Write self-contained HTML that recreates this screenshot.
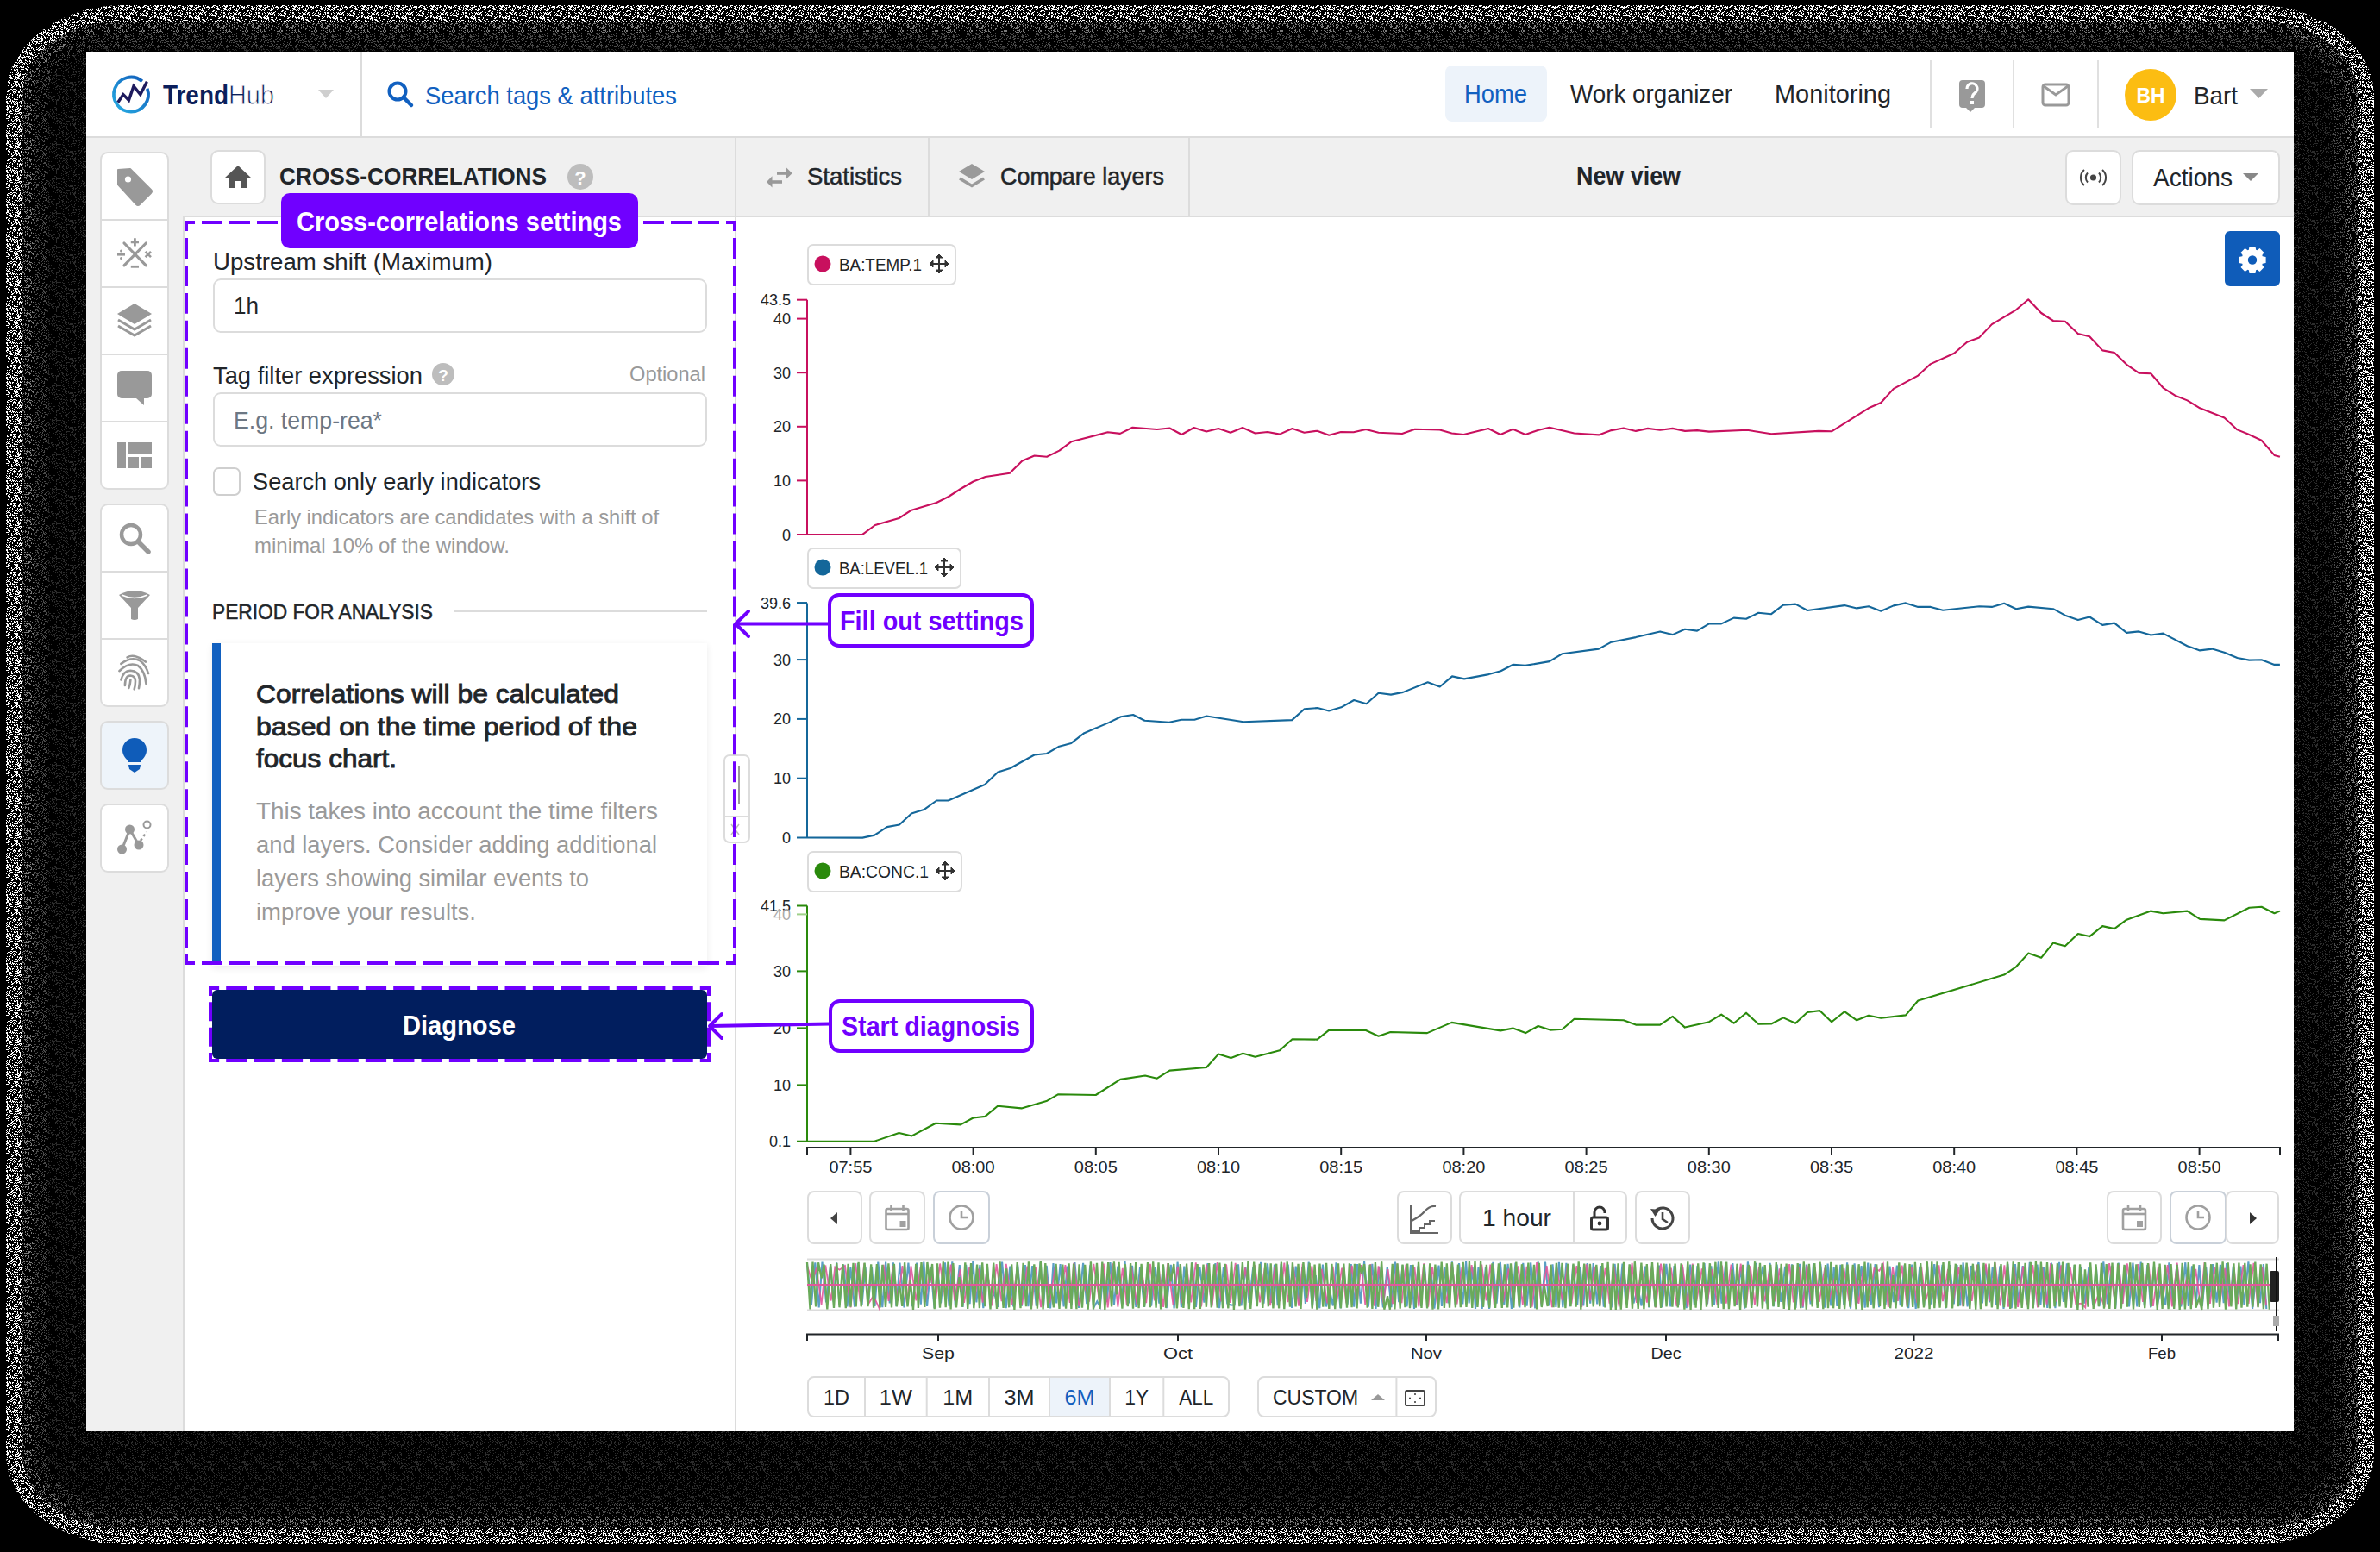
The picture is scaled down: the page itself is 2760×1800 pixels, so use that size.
<!DOCTYPE html>
<html><head><meta charset="utf-8"><title>TrendHub</title>
<style>
html,body{margin:0;padding:0;background:#000;width:2760px;height:1800px;overflow:hidden}
svg{display:block;font-family:"Liberation Sans", sans-serif}
</style></head><body>
<svg width="2760" height="1800" viewBox="0 0 2760 1800">
<defs><pattern id="pw" patternUnits="userSpaceOnUse" width="40" height="40"><path d="M0 0h1v1h-1zM3 0h1v1h-1zM8 0h1v1h-1zM9 0h1v1h-1zM13 0h1v1h-1zM16 0h1v1h-1zM19 0h1v1h-1zM20 0h1v1h-1zM24 0h1v1h-1zM26 0h1v1h-1zM27 0h1v1h-1zM30 0h1v1h-1zM31 0h1v1h-1zM32 0h1v1h-1zM34 0h1v1h-1zM35 0h1v1h-1zM39 0h1v1h-1zM2 1h1v1h-1zM3 1h1v1h-1zM10 1h1v1h-1zM16 1h1v1h-1zM17 1h1v1h-1zM20 1h1v1h-1zM31 1h1v1h-1zM32 1h1v1h-1zM37 1h1v1h-1zM3 2h1v1h-1zM8 2h1v1h-1zM11 2h1v1h-1zM20 2h1v1h-1zM23 2h1v1h-1zM32 2h1v1h-1zM33 2h1v1h-1zM34 2h1v1h-1zM0 3h1v1h-1zM3 3h1v1h-1zM4 3h1v1h-1zM5 3h1v1h-1zM7 3h1v1h-1zM8 3h1v1h-1zM11 3h1v1h-1zM12 3h1v1h-1zM14 3h1v1h-1zM15 3h1v1h-1zM18 3h1v1h-1zM20 3h1v1h-1zM23 3h1v1h-1zM24 3h1v1h-1zM27 3h1v1h-1zM30 3h1v1h-1zM31 3h1v1h-1zM32 3h1v1h-1zM34 3h1v1h-1zM38 3h1v1h-1zM2 4h1v1h-1zM6 4h1v1h-1zM8 4h1v1h-1zM9 4h1v1h-1zM12 4h1v1h-1zM14 4h1v1h-1zM18 4h1v1h-1zM19 4h1v1h-1zM21 4h1v1h-1zM25 4h1v1h-1zM32 4h1v1h-1zM35 4h1v1h-1zM36 4h1v1h-1zM38 4h1v1h-1zM0 5h1v1h-1zM3 5h1v1h-1zM4 5h1v1h-1zM5 5h1v1h-1zM8 5h1v1h-1zM9 5h1v1h-1zM18 5h1v1h-1zM20 5h1v1h-1zM21 5h1v1h-1zM23 5h1v1h-1zM29 5h1v1h-1zM34 5h1v1h-1zM36 5h1v1h-1zM37 5h1v1h-1zM38 5h1v1h-1zM7 6h1v1h-1zM8 6h1v1h-1zM9 6h1v1h-1zM14 6h1v1h-1zM17 6h1v1h-1zM19 6h1v1h-1zM20 6h1v1h-1zM22 6h1v1h-1zM23 6h1v1h-1zM26 6h1v1h-1zM27 6h1v1h-1zM28 6h1v1h-1zM30 6h1v1h-1zM35 6h1v1h-1zM36 6h1v1h-1zM38 6h1v1h-1zM0 7h1v1h-1zM1 7h1v1h-1zM3 7h1v1h-1zM6 7h1v1h-1zM7 7h1v1h-1zM11 7h1v1h-1zM12 7h1v1h-1zM18 7h1v1h-1zM20 7h1v1h-1zM21 7h1v1h-1zM22 7h1v1h-1zM23 7h1v1h-1zM30 7h1v1h-1zM31 7h1v1h-1zM32 7h1v1h-1zM35 7h1v1h-1zM36 7h1v1h-1zM0 8h1v1h-1zM1 8h1v1h-1zM2 8h1v1h-1zM3 8h1v1h-1zM5 8h1v1h-1zM6 8h1v1h-1zM8 8h1v1h-1zM12 8h1v1h-1zM15 8h1v1h-1zM17 8h1v1h-1zM21 8h1v1h-1zM22 8h1v1h-1zM25 8h1v1h-1zM27 8h1v1h-1zM29 8h1v1h-1zM30 8h1v1h-1zM37 8h1v1h-1zM39 8h1v1h-1zM2 9h1v1h-1zM3 9h1v1h-1zM11 9h1v1h-1zM12 9h1v1h-1zM13 9h1v1h-1zM17 9h1v1h-1zM19 9h1v1h-1zM20 9h1v1h-1zM21 9h1v1h-1zM26 9h1v1h-1zM27 9h1v1h-1zM34 9h1v1h-1zM37 9h1v1h-1zM2 10h1v1h-1zM4 10h1v1h-1zM5 10h1v1h-1zM8 10h1v1h-1zM11 10h1v1h-1zM22 10h1v1h-1zM23 10h1v1h-1zM24 10h1v1h-1zM27 10h1v1h-1zM32 10h1v1h-1zM34 10h1v1h-1zM38 10h1v1h-1zM1 11h1v1h-1zM12 11h1v1h-1zM13 11h1v1h-1zM14 11h1v1h-1zM17 11h1v1h-1zM20 11h1v1h-1zM21 11h1v1h-1zM22 11h1v1h-1zM24 11h1v1h-1zM25 11h1v1h-1zM27 11h1v1h-1zM31 11h1v1h-1zM32 11h1v1h-1zM34 11h1v1h-1zM36 11h1v1h-1zM7 12h1v1h-1zM8 12h1v1h-1zM10 12h1v1h-1zM16 12h1v1h-1zM19 12h1v1h-1zM23 12h1v1h-1zM26 12h1v1h-1zM33 12h1v1h-1zM34 12h1v1h-1zM35 12h1v1h-1zM6 13h1v1h-1zM7 13h1v1h-1zM11 13h1v1h-1zM35 13h1v1h-1zM39 13h1v1h-1zM3 14h1v1h-1zM9 14h1v1h-1zM16 14h1v1h-1zM17 14h1v1h-1zM19 14h1v1h-1zM20 14h1v1h-1zM26 14h1v1h-1zM30 14h1v1h-1zM32 14h1v1h-1zM34 14h1v1h-1zM37 14h1v1h-1zM38 14h1v1h-1zM2 15h1v1h-1zM5 15h1v1h-1zM9 15h1v1h-1zM11 15h1v1h-1zM17 15h1v1h-1zM19 15h1v1h-1zM20 15h1v1h-1zM24 15h1v1h-1zM27 15h1v1h-1zM28 15h1v1h-1zM31 15h1v1h-1zM32 15h1v1h-1zM33 15h1v1h-1zM36 15h1v1h-1zM37 15h1v1h-1zM4 16h1v1h-1zM6 16h1v1h-1zM10 16h1v1h-1zM11 16h1v1h-1zM15 16h1v1h-1zM17 16h1v1h-1zM21 16h1v1h-1zM24 16h1v1h-1zM31 16h1v1h-1zM33 16h1v1h-1zM34 16h1v1h-1zM36 16h1v1h-1zM38 16h1v1h-1zM2 17h1v1h-1zM3 17h1v1h-1zM5 17h1v1h-1zM6 17h1v1h-1zM7 17h1v1h-1zM8 17h1v1h-1zM9 17h1v1h-1zM19 17h1v1h-1zM20 17h1v1h-1zM27 17h1v1h-1zM30 17h1v1h-1zM38 17h1v1h-1zM0 18h1v1h-1zM4 18h1v1h-1zM5 18h1v1h-1zM10 18h1v1h-1zM13 18h1v1h-1zM17 18h1v1h-1zM19 18h1v1h-1zM21 18h1v1h-1zM22 18h1v1h-1zM25 18h1v1h-1zM26 18h1v1h-1zM30 18h1v1h-1zM32 18h1v1h-1zM34 18h1v1h-1zM35 18h1v1h-1zM39 18h1v1h-1zM9 19h1v1h-1zM10 19h1v1h-1zM13 19h1v1h-1zM16 19h1v1h-1zM19 19h1v1h-1zM20 19h1v1h-1zM22 19h1v1h-1zM26 19h1v1h-1zM28 19h1v1h-1zM29 19h1v1h-1zM30 19h1v1h-1zM0 20h1v1h-1zM14 20h1v1h-1zM15 20h1v1h-1zM19 20h1v1h-1zM22 20h1v1h-1zM23 20h1v1h-1zM25 20h1v1h-1zM26 20h1v1h-1zM27 20h1v1h-1zM30 20h1v1h-1zM31 20h1v1h-1zM34 20h1v1h-1zM36 20h1v1h-1zM0 21h1v1h-1zM13 21h1v1h-1zM14 21h1v1h-1zM23 21h1v1h-1zM26 21h1v1h-1zM27 21h1v1h-1zM29 21h1v1h-1zM30 21h1v1h-1zM31 21h1v1h-1zM4 22h1v1h-1zM5 22h1v1h-1zM10 22h1v1h-1zM29 22h1v1h-1zM31 22h1v1h-1zM34 22h1v1h-1zM35 22h1v1h-1zM36 22h1v1h-1zM39 22h1v1h-1zM1 23h1v1h-1zM12 23h1v1h-1zM13 23h1v1h-1zM15 23h1v1h-1zM16 23h1v1h-1zM17 23h1v1h-1zM23 23h1v1h-1zM31 23h1v1h-1zM35 23h1v1h-1zM36 23h1v1h-1zM37 23h1v1h-1zM3 24h1v1h-1zM6 24h1v1h-1zM9 24h1v1h-1zM11 24h1v1h-1zM14 24h1v1h-1zM19 24h1v1h-1zM23 24h1v1h-1zM25 24h1v1h-1zM27 24h1v1h-1zM32 24h1v1h-1zM37 24h1v1h-1zM38 24h1v1h-1zM1 25h1v1h-1zM2 25h1v1h-1zM8 25h1v1h-1zM10 25h1v1h-1zM12 25h1v1h-1zM13 25h1v1h-1zM16 25h1v1h-1zM18 25h1v1h-1zM22 25h1v1h-1zM23 25h1v1h-1zM28 25h1v1h-1zM30 25h1v1h-1zM31 25h1v1h-1zM32 25h1v1h-1zM33 25h1v1h-1zM34 25h1v1h-1zM39 25h1v1h-1zM0 26h1v1h-1zM4 26h1v1h-1zM5 26h1v1h-1zM6 26h1v1h-1zM8 26h1v1h-1zM9 26h1v1h-1zM15 26h1v1h-1zM16 26h1v1h-1zM17 26h1v1h-1zM18 26h1v1h-1zM21 26h1v1h-1zM22 26h1v1h-1zM24 26h1v1h-1zM25 26h1v1h-1zM26 26h1v1h-1zM27 26h1v1h-1zM28 26h1v1h-1zM29 26h1v1h-1zM33 26h1v1h-1zM35 26h1v1h-1zM37 26h1v1h-1zM15 27h1v1h-1zM17 27h1v1h-1zM18 27h1v1h-1zM21 27h1v1h-1zM22 27h1v1h-1zM26 27h1v1h-1zM34 27h1v1h-1zM35 27h1v1h-1zM37 27h1v1h-1zM39 27h1v1h-1zM1 28h1v1h-1zM4 28h1v1h-1zM6 28h1v1h-1zM10 28h1v1h-1zM12 28h1v1h-1zM16 28h1v1h-1zM30 28h1v1h-1zM32 28h1v1h-1zM34 28h1v1h-1zM35 28h1v1h-1zM36 28h1v1h-1zM37 28h1v1h-1zM0 29h1v1h-1zM6 29h1v1h-1zM8 29h1v1h-1zM11 29h1v1h-1zM14 29h1v1h-1zM20 29h1v1h-1zM23 29h1v1h-1zM29 29h1v1h-1zM32 29h1v1h-1zM38 29h1v1h-1zM2 30h1v1h-1zM4 30h1v1h-1zM5 30h1v1h-1zM14 30h1v1h-1zM20 30h1v1h-1zM22 30h1v1h-1zM23 30h1v1h-1zM24 30h1v1h-1zM25 30h1v1h-1zM29 30h1v1h-1zM30 30h1v1h-1zM34 30h1v1h-1zM1 31h1v1h-1zM7 31h1v1h-1zM11 31h1v1h-1zM22 31h1v1h-1zM24 31h1v1h-1zM31 31h1v1h-1zM32 31h1v1h-1zM34 31h1v1h-1zM35 31h1v1h-1zM0 32h1v1h-1zM5 32h1v1h-1zM8 32h1v1h-1zM11 32h1v1h-1zM17 32h1v1h-1zM18 32h1v1h-1zM19 32h1v1h-1zM21 32h1v1h-1zM23 32h1v1h-1zM24 32h1v1h-1zM25 32h1v1h-1zM26 32h1v1h-1zM29 32h1v1h-1zM35 32h1v1h-1zM37 32h1v1h-1zM39 32h1v1h-1zM4 33h1v1h-1zM6 33h1v1h-1zM7 33h1v1h-1zM9 33h1v1h-1zM14 33h1v1h-1zM18 33h1v1h-1zM20 33h1v1h-1zM22 33h1v1h-1zM27 33h1v1h-1zM28 33h1v1h-1zM30 33h1v1h-1zM34 33h1v1h-1zM37 33h1v1h-1zM38 33h1v1h-1zM0 34h1v1h-1zM6 34h1v1h-1zM8 34h1v1h-1zM9 34h1v1h-1zM10 34h1v1h-1zM11 34h1v1h-1zM16 34h1v1h-1zM25 34h1v1h-1zM26 34h1v1h-1zM28 34h1v1h-1zM31 34h1v1h-1zM32 34h1v1h-1zM37 34h1v1h-1zM39 34h1v1h-1zM4 35h1v1h-1zM7 35h1v1h-1zM12 35h1v1h-1zM16 35h1v1h-1zM17 35h1v1h-1zM19 35h1v1h-1zM20 35h1v1h-1zM38 35h1v1h-1zM39 35h1v1h-1zM2 36h1v1h-1zM10 36h1v1h-1zM12 36h1v1h-1zM14 36h1v1h-1zM25 36h1v1h-1zM26 36h1v1h-1zM27 36h1v1h-1zM28 36h1v1h-1zM30 36h1v1h-1zM31 36h1v1h-1zM32 36h1v1h-1zM38 36h1v1h-1zM39 36h1v1h-1zM2 37h1v1h-1zM7 37h1v1h-1zM8 37h1v1h-1zM10 37h1v1h-1zM11 37h1v1h-1zM12 37h1v1h-1zM14 37h1v1h-1zM15 37h1v1h-1zM16 37h1v1h-1zM19 37h1v1h-1zM23 37h1v1h-1zM24 37h1v1h-1zM27 37h1v1h-1zM31 37h1v1h-1zM32 37h1v1h-1zM35 37h1v1h-1zM1 38h1v1h-1zM2 38h1v1h-1zM3 38h1v1h-1zM5 38h1v1h-1zM6 38h1v1h-1zM7 38h1v1h-1zM8 38h1v1h-1zM10 38h1v1h-1zM13 38h1v1h-1zM15 38h1v1h-1zM17 38h1v1h-1zM18 38h1v1h-1zM20 38h1v1h-1zM22 38h1v1h-1zM24 38h1v1h-1zM26 38h1v1h-1zM27 38h1v1h-1zM32 38h1v1h-1zM33 38h1v1h-1zM35 38h1v1h-1zM39 38h1v1h-1zM0 39h1v1h-1zM1 39h1v1h-1zM8 39h1v1h-1zM29 39h1v1h-1zM30 39h1v1h-1zM32 39h1v1h-1zM35 39h1v1h-1z" fill="#ffffff"/></pattern></defs>
<defs><pattern id="pg1" patternUnits="userSpaceOnUse" width="40" height="40"><path d="M2 0h1v1h-1zM3 0h1v1h-1zM11 0h1v1h-1zM20 0h1v1h-1zM21 0h1v1h-1zM28 0h1v1h-1zM29 0h1v1h-1zM31 0h1v1h-1zM35 0h1v1h-1zM5 1h1v1h-1zM22 1h1v1h-1zM25 1h1v1h-1zM37 1h1v1h-1zM1 2h1v1h-1zM5 2h1v1h-1zM7 2h1v1h-1zM10 2h1v1h-1zM12 2h1v1h-1zM16 2h1v1h-1zM20 2h1v1h-1zM22 2h1v1h-1zM24 2h1v1h-1zM26 2h1v1h-1zM28 2h1v1h-1zM31 2h1v1h-1zM32 2h1v1h-1zM35 2h1v1h-1zM37 2h1v1h-1zM38 2h1v1h-1zM2 3h1v1h-1zM4 3h1v1h-1zM13 3h1v1h-1zM16 3h1v1h-1zM19 3h1v1h-1zM23 3h1v1h-1zM28 3h1v1h-1zM30 3h1v1h-1zM31 3h1v1h-1zM32 3h1v1h-1zM33 3h1v1h-1zM34 3h1v1h-1zM0 4h1v1h-1zM10 4h1v1h-1zM11 4h1v1h-1zM13 4h1v1h-1zM16 4h1v1h-1zM17 4h1v1h-1zM18 4h1v1h-1zM19 4h1v1h-1zM24 4h1v1h-1zM31 4h1v1h-1zM34 4h1v1h-1zM35 4h1v1h-1zM4 5h1v1h-1zM6 5h1v1h-1zM10 5h1v1h-1zM14 5h1v1h-1zM16 5h1v1h-1zM20 5h1v1h-1zM22 5h1v1h-1zM28 5h1v1h-1zM29 5h1v1h-1zM30 5h1v1h-1zM35 5h1v1h-1zM11 6h1v1h-1zM19 6h1v1h-1zM22 6h1v1h-1zM24 6h1v1h-1zM25 6h1v1h-1zM29 6h1v1h-1zM31 6h1v1h-1zM36 6h1v1h-1zM0 7h1v1h-1zM11 7h1v1h-1zM13 7h1v1h-1zM16 7h1v1h-1zM30 7h1v1h-1zM36 7h1v1h-1zM2 8h1v1h-1zM8 8h1v1h-1zM11 8h1v1h-1zM14 8h1v1h-1zM16 8h1v1h-1zM22 8h1v1h-1zM24 8h1v1h-1zM25 8h1v1h-1zM35 8h1v1h-1zM36 8h1v1h-1zM38 8h1v1h-1zM5 9h1v1h-1zM6 9h1v1h-1zM10 9h1v1h-1zM23 9h1v1h-1zM31 9h1v1h-1zM39 9h1v1h-1zM1 10h1v1h-1zM4 10h1v1h-1zM9 10h1v1h-1zM11 10h1v1h-1zM20 10h1v1h-1zM21 10h1v1h-1zM22 10h1v1h-1zM27 10h1v1h-1zM9 11h1v1h-1zM14 11h1v1h-1zM16 11h1v1h-1zM17 11h1v1h-1zM25 11h1v1h-1zM30 11h1v1h-1zM33 11h1v1h-1zM34 11h1v1h-1zM35 11h1v1h-1zM6 12h1v1h-1zM7 12h1v1h-1zM11 12h1v1h-1zM33 12h1v1h-1zM34 12h1v1h-1zM36 12h1v1h-1zM0 13h1v1h-1zM3 13h1v1h-1zM4 13h1v1h-1zM6 13h1v1h-1zM7 13h1v1h-1zM9 13h1v1h-1zM12 13h1v1h-1zM17 13h1v1h-1zM19 13h1v1h-1zM20 13h1v1h-1zM26 13h1v1h-1zM28 13h1v1h-1zM29 13h1v1h-1zM30 13h1v1h-1zM31 13h1v1h-1zM32 13h1v1h-1zM33 13h1v1h-1zM1 14h1v1h-1zM2 14h1v1h-1zM5 14h1v1h-1zM18 14h1v1h-1zM22 14h1v1h-1zM24 14h1v1h-1zM25 14h1v1h-1zM32 14h1v1h-1zM37 14h1v1h-1zM38 14h1v1h-1zM39 14h1v1h-1zM2 15h1v1h-1zM8 15h1v1h-1zM19 15h1v1h-1zM23 15h1v1h-1zM29 15h1v1h-1zM38 15h1v1h-1zM0 16h1v1h-1zM4 16h1v1h-1zM7 16h1v1h-1zM13 16h1v1h-1zM16 16h1v1h-1zM18 16h1v1h-1zM27 16h1v1h-1zM29 16h1v1h-1zM30 16h1v1h-1zM33 16h1v1h-1zM0 17h1v1h-1zM4 17h1v1h-1zM10 17h1v1h-1zM11 17h1v1h-1zM12 17h1v1h-1zM14 17h1v1h-1zM22 17h1v1h-1zM23 17h1v1h-1zM26 17h1v1h-1zM29 17h1v1h-1zM33 17h1v1h-1zM0 18h1v1h-1zM1 18h1v1h-1zM3 18h1v1h-1zM4 18h1v1h-1zM10 18h1v1h-1zM12 18h1v1h-1zM15 18h1v1h-1zM24 18h1v1h-1zM33 18h1v1h-1zM36 18h1v1h-1zM1 19h1v1h-1zM7 19h1v1h-1zM8 19h1v1h-1zM15 19h1v1h-1zM21 19h1v1h-1zM23 19h1v1h-1zM24 19h1v1h-1zM25 19h1v1h-1zM26 19h1v1h-1zM31 19h1v1h-1zM36 19h1v1h-1zM8 20h1v1h-1zM10 20h1v1h-1zM12 20h1v1h-1zM22 20h1v1h-1zM27 20h1v1h-1zM11 21h1v1h-1zM24 21h1v1h-1zM1 22h1v1h-1zM3 22h1v1h-1zM8 22h1v1h-1zM11 22h1v1h-1zM16 22h1v1h-1zM17 22h1v1h-1zM18 22h1v1h-1zM21 22h1v1h-1zM29 22h1v1h-1zM31 22h1v1h-1zM3 23h1v1h-1zM7 23h1v1h-1zM9 23h1v1h-1zM13 23h1v1h-1zM17 23h1v1h-1zM18 23h1v1h-1zM24 23h1v1h-1zM25 23h1v1h-1zM27 23h1v1h-1zM28 23h1v1h-1zM30 23h1v1h-1zM31 23h1v1h-1zM34 23h1v1h-1zM39 23h1v1h-1zM1 24h1v1h-1zM6 24h1v1h-1zM7 24h1v1h-1zM9 24h1v1h-1zM14 24h1v1h-1zM16 24h1v1h-1zM18 24h1v1h-1zM21 24h1v1h-1zM22 24h1v1h-1zM25 24h1v1h-1zM26 24h1v1h-1zM32 24h1v1h-1zM34 24h1v1h-1zM35 24h1v1h-1zM36 24h1v1h-1zM6 25h1v1h-1zM8 25h1v1h-1zM9 25h1v1h-1zM14 25h1v1h-1zM20 25h1v1h-1zM23 25h1v1h-1zM28 25h1v1h-1zM33 25h1v1h-1zM37 25h1v1h-1zM39 25h1v1h-1zM0 26h1v1h-1zM9 26h1v1h-1zM12 26h1v1h-1zM17 26h1v1h-1zM21 26h1v1h-1zM24 26h1v1h-1zM31 26h1v1h-1zM34 26h1v1h-1zM35 26h1v1h-1zM3 27h1v1h-1zM4 27h1v1h-1zM8 27h1v1h-1zM9 27h1v1h-1zM10 27h1v1h-1zM13 27h1v1h-1zM17 27h1v1h-1zM18 27h1v1h-1zM22 27h1v1h-1zM26 27h1v1h-1zM35 27h1v1h-1zM2 28h1v1h-1zM3 28h1v1h-1zM7 28h1v1h-1zM12 28h1v1h-1zM13 28h1v1h-1zM22 28h1v1h-1zM23 28h1v1h-1zM25 28h1v1h-1zM29 28h1v1h-1zM31 28h1v1h-1zM7 29h1v1h-1zM11 29h1v1h-1zM13 29h1v1h-1zM19 29h1v1h-1zM20 29h1v1h-1zM26 29h1v1h-1zM29 29h1v1h-1zM32 29h1v1h-1zM36 29h1v1h-1zM2 30h1v1h-1zM12 30h1v1h-1zM13 30h1v1h-1zM14 30h1v1h-1zM19 30h1v1h-1zM20 30h1v1h-1zM22 30h1v1h-1zM26 30h1v1h-1zM31 30h1v1h-1zM36 30h1v1h-1zM38 30h1v1h-1zM0 31h1v1h-1zM3 31h1v1h-1zM5 31h1v1h-1zM12 31h1v1h-1zM13 31h1v1h-1zM16 31h1v1h-1zM18 31h1v1h-1zM19 31h1v1h-1zM21 31h1v1h-1zM29 31h1v1h-1zM31 31h1v1h-1zM1 32h1v1h-1zM4 32h1v1h-1zM6 32h1v1h-1zM10 32h1v1h-1zM11 32h1v1h-1zM15 32h1v1h-1zM18 32h1v1h-1zM22 32h1v1h-1zM24 32h1v1h-1zM25 32h1v1h-1zM30 32h1v1h-1zM32 32h1v1h-1zM33 32h1v1h-1zM34 32h1v1h-1zM1 33h1v1h-1zM5 33h1v1h-1zM15 33h1v1h-1zM17 33h1v1h-1zM18 33h1v1h-1zM19 33h1v1h-1zM29 33h1v1h-1zM34 33h1v1h-1zM35 33h1v1h-1zM5 34h1v1h-1zM22 34h1v1h-1zM26 34h1v1h-1zM34 34h1v1h-1zM4 35h1v1h-1zM6 35h1v1h-1zM7 35h1v1h-1zM12 35h1v1h-1zM15 35h1v1h-1zM19 35h1v1h-1zM21 35h1v1h-1zM22 35h1v1h-1zM26 35h1v1h-1zM32 35h1v1h-1zM38 35h1v1h-1zM1 36h1v1h-1zM2 36h1v1h-1zM4 36h1v1h-1zM6 36h1v1h-1zM7 36h1v1h-1zM17 36h1v1h-1zM22 36h1v1h-1zM24 36h1v1h-1zM26 36h1v1h-1zM27 36h1v1h-1zM5 37h1v1h-1zM18 37h1v1h-1zM19 37h1v1h-1zM21 37h1v1h-1zM23 37h1v1h-1zM28 37h1v1h-1zM7 38h1v1h-1zM11 38h1v1h-1zM18 38h1v1h-1zM23 38h1v1h-1zM25 38h1v1h-1zM28 38h1v1h-1zM2 39h1v1h-1zM3 39h1v1h-1zM4 39h1v1h-1zM11 39h1v1h-1zM12 39h1v1h-1zM14 39h1v1h-1zM22 39h1v1h-1zM24 39h1v1h-1zM32 39h1v1h-1z" fill="#7a7a7a"/></pattern></defs>
<defs><pattern id="pg2" patternUnits="userSpaceOnUse" width="40" height="40"><path d="M1 0h1v1h-1zM3 0h1v1h-1zM4 0h1v1h-1zM12 0h1v1h-1zM13 0h1v1h-1zM14 0h1v1h-1zM19 0h1v1h-1zM25 0h1v1h-1zM29 0h1v1h-1zM31 0h1v1h-1zM4 1h1v1h-1zM7 1h1v1h-1zM8 1h1v1h-1zM15 1h1v1h-1zM17 1h1v1h-1zM25 1h1v1h-1zM26 1h1v1h-1zM32 1h1v1h-1zM34 1h1v1h-1zM0 2h1v1h-1zM9 2h1v1h-1zM11 2h1v1h-1zM15 2h1v1h-1zM16 2h1v1h-1zM17 2h1v1h-1zM21 2h1v1h-1zM24 2h1v1h-1zM25 2h1v1h-1zM26 2h1v1h-1zM27 2h1v1h-1zM29 2h1v1h-1zM30 2h1v1h-1zM34 2h1v1h-1zM2 3h1v1h-1zM8 3h1v1h-1zM11 3h1v1h-1zM14 3h1v1h-1zM15 3h1v1h-1zM25 3h1v1h-1zM26 3h1v1h-1zM1 4h1v1h-1zM5 4h1v1h-1zM7 4h1v1h-1zM10 4h1v1h-1zM11 4h1v1h-1zM16 4h1v1h-1zM17 4h1v1h-1zM19 4h1v1h-1zM21 4h1v1h-1zM27 4h1v1h-1zM34 4h1v1h-1zM35 4h1v1h-1zM0 5h1v1h-1zM4 5h1v1h-1zM7 5h1v1h-1zM15 5h1v1h-1zM16 5h1v1h-1zM23 5h1v1h-1zM25 5h1v1h-1zM30 5h1v1h-1zM32 5h1v1h-1zM33 5h1v1h-1zM39 5h1v1h-1zM5 6h1v1h-1zM23 6h1v1h-1zM27 6h1v1h-1zM28 6h1v1h-1zM29 6h1v1h-1zM31 6h1v1h-1zM37 6h1v1h-1zM0 7h1v1h-1zM4 7h1v1h-1zM5 7h1v1h-1zM11 7h1v1h-1zM18 7h1v1h-1zM1 8h1v1h-1zM2 8h1v1h-1zM9 8h1v1h-1zM10 8h1v1h-1zM16 8h1v1h-1zM22 8h1v1h-1zM26 8h1v1h-1zM33 8h1v1h-1zM34 8h1v1h-1zM35 8h1v1h-1zM37 8h1v1h-1zM38 8h1v1h-1zM13 9h1v1h-1zM16 9h1v1h-1zM17 9h1v1h-1zM26 9h1v1h-1zM28 9h1v1h-1zM30 9h1v1h-1zM31 9h1v1h-1zM38 9h1v1h-1zM8 10h1v1h-1zM15 10h1v1h-1zM34 10h1v1h-1zM0 11h1v1h-1zM1 11h1v1h-1zM5 11h1v1h-1zM9 11h1v1h-1zM13 11h1v1h-1zM15 11h1v1h-1zM17 11h1v1h-1zM25 11h1v1h-1zM35 11h1v1h-1zM36 11h1v1h-1zM8 12h1v1h-1zM12 12h1v1h-1zM14 12h1v1h-1zM16 12h1v1h-1zM17 12h1v1h-1zM18 12h1v1h-1zM23 12h1v1h-1zM27 12h1v1h-1zM30 12h1v1h-1zM36 12h1v1h-1zM38 12h1v1h-1zM0 13h1v1h-1zM2 13h1v1h-1zM3 13h1v1h-1zM4 13h1v1h-1zM11 13h1v1h-1zM12 13h1v1h-1zM17 13h1v1h-1zM22 13h1v1h-1zM23 13h1v1h-1zM24 13h1v1h-1zM32 13h1v1h-1zM33 13h1v1h-1zM34 13h1v1h-1zM37 13h1v1h-1zM3 14h1v1h-1zM6 14h1v1h-1zM7 14h1v1h-1zM8 14h1v1h-1zM13 14h1v1h-1zM17 14h1v1h-1zM22 14h1v1h-1zM23 14h1v1h-1zM27 14h1v1h-1zM34 14h1v1h-1zM39 14h1v1h-1zM2 15h1v1h-1zM3 15h1v1h-1zM4 15h1v1h-1zM9 15h1v1h-1zM21 15h1v1h-1zM23 15h1v1h-1zM27 15h1v1h-1zM30 15h1v1h-1zM33 15h1v1h-1zM39 15h1v1h-1zM2 16h1v1h-1zM10 16h1v1h-1zM14 16h1v1h-1zM16 16h1v1h-1zM23 16h1v1h-1zM27 16h1v1h-1zM28 16h1v1h-1zM32 16h1v1h-1zM39 16h1v1h-1zM1 17h1v1h-1zM2 17h1v1h-1zM8 17h1v1h-1zM10 17h1v1h-1zM12 17h1v1h-1zM23 17h1v1h-1zM29 17h1v1h-1zM0 18h1v1h-1zM10 18h1v1h-1zM11 18h1v1h-1zM13 18h1v1h-1zM14 18h1v1h-1zM16 18h1v1h-1zM27 18h1v1h-1zM29 18h1v1h-1zM30 18h1v1h-1zM31 18h1v1h-1zM0 19h1v1h-1zM9 19h1v1h-1zM11 19h1v1h-1zM12 19h1v1h-1zM14 19h1v1h-1zM24 19h1v1h-1zM38 19h1v1h-1zM3 20h1v1h-1zM10 20h1v1h-1zM12 20h1v1h-1zM18 20h1v1h-1zM39 20h1v1h-1zM1 21h1v1h-1zM2 21h1v1h-1zM6 21h1v1h-1zM9 21h1v1h-1zM14 21h1v1h-1zM15 21h1v1h-1zM21 21h1v1h-1zM23 21h1v1h-1zM24 21h1v1h-1zM25 21h1v1h-1zM27 21h1v1h-1zM28 21h1v1h-1zM37 21h1v1h-1zM39 21h1v1h-1zM5 22h1v1h-1zM9 22h1v1h-1zM20 22h1v1h-1zM21 22h1v1h-1zM22 22h1v1h-1zM32 22h1v1h-1zM39 22h1v1h-1zM8 23h1v1h-1zM11 23h1v1h-1zM13 23h1v1h-1zM15 23h1v1h-1zM20 23h1v1h-1zM25 23h1v1h-1zM28 23h1v1h-1zM33 23h1v1h-1zM36 23h1v1h-1zM39 23h1v1h-1zM0 24h1v1h-1zM4 24h1v1h-1zM5 24h1v1h-1zM17 24h1v1h-1zM25 24h1v1h-1zM30 24h1v1h-1zM32 24h1v1h-1zM34 24h1v1h-1zM38 24h1v1h-1zM5 25h1v1h-1zM7 25h1v1h-1zM9 25h1v1h-1zM11 25h1v1h-1zM16 25h1v1h-1zM17 25h1v1h-1zM25 25h1v1h-1zM34 25h1v1h-1zM36 25h1v1h-1zM0 26h1v1h-1zM3 26h1v1h-1zM8 26h1v1h-1zM13 26h1v1h-1zM14 26h1v1h-1zM27 26h1v1h-1zM28 26h1v1h-1zM32 26h1v1h-1zM36 26h1v1h-1zM38 26h1v1h-1zM2 27h1v1h-1zM8 27h1v1h-1zM11 28h1v1h-1zM12 28h1v1h-1zM14 28h1v1h-1zM17 28h1v1h-1zM21 28h1v1h-1zM24 28h1v1h-1zM34 28h1v1h-1zM38 28h1v1h-1zM10 29h1v1h-1zM11 29h1v1h-1zM12 29h1v1h-1zM16 29h1v1h-1zM23 29h1v1h-1zM29 29h1v1h-1zM30 29h1v1h-1zM31 29h1v1h-1zM34 29h1v1h-1zM35 29h1v1h-1zM36 29h1v1h-1zM38 29h1v1h-1zM1 30h1v1h-1zM6 30h1v1h-1zM13 30h1v1h-1zM14 30h1v1h-1zM22 30h1v1h-1zM27 30h1v1h-1zM4 31h1v1h-1zM13 31h1v1h-1zM14 31h1v1h-1zM18 31h1v1h-1zM20 31h1v1h-1zM25 31h1v1h-1zM27 31h1v1h-1zM37 31h1v1h-1zM4 32h1v1h-1zM12 32h1v1h-1zM13 32h1v1h-1zM16 32h1v1h-1zM24 32h1v1h-1zM25 32h1v1h-1zM39 32h1v1h-1zM1 33h1v1h-1zM2 33h1v1h-1zM5 33h1v1h-1zM10 33h1v1h-1zM19 33h1v1h-1zM21 33h1v1h-1zM22 33h1v1h-1zM28 33h1v1h-1zM30 33h1v1h-1zM36 33h1v1h-1zM15 34h1v1h-1zM19 34h1v1h-1zM21 34h1v1h-1zM24 34h1v1h-1zM26 34h1v1h-1zM31 34h1v1h-1zM34 34h1v1h-1zM36 34h1v1h-1zM37 34h1v1h-1zM38 34h1v1h-1zM0 35h1v1h-1zM2 35h1v1h-1zM4 35h1v1h-1zM15 35h1v1h-1zM20 35h1v1h-1zM26 35h1v1h-1zM27 35h1v1h-1zM28 35h1v1h-1zM34 35h1v1h-1zM3 36h1v1h-1zM4 36h1v1h-1zM9 36h1v1h-1zM15 36h1v1h-1zM19 36h1v1h-1zM5 37h1v1h-1zM18 37h1v1h-1zM28 37h1v1h-1zM30 37h1v1h-1zM1 38h1v1h-1zM2 38h1v1h-1zM3 38h1v1h-1zM6 38h1v1h-1zM11 38h1v1h-1zM12 38h1v1h-1zM15 38h1v1h-1zM34 38h1v1h-1zM3 39h1v1h-1zM9 39h1v1h-1zM27 39h1v1h-1zM33 39h1v1h-1zM34 39h1v1h-1zM38 39h1v1h-1z" fill="#4a4a4a"/></pattern></defs>
<defs><pattern id="pd" patternUnits="userSpaceOnUse" width="40" height="40"><path d="M5 0h1v1h-1zM6 0h1v1h-1zM15 0h1v1h-1zM21 0h1v1h-1zM25 0h1v1h-1zM37 0h1v1h-1zM38 0h1v1h-1zM15 1h1v1h-1zM25 1h1v1h-1zM28 1h1v1h-1zM31 1h1v1h-1zM35 1h1v1h-1zM37 1h1v1h-1zM5 2h1v1h-1zM7 2h1v1h-1zM8 2h1v1h-1zM11 2h1v1h-1zM12 2h1v1h-1zM33 2h1v1h-1zM36 2h1v1h-1zM39 2h1v1h-1zM6 3h1v1h-1zM7 3h1v1h-1zM21 3h1v1h-1zM28 3h1v1h-1zM31 3h1v1h-1zM37 3h1v1h-1zM3 4h1v1h-1zM5 4h1v1h-1zM8 4h1v1h-1zM14 4h1v1h-1zM23 4h1v1h-1zM24 4h1v1h-1zM39 4h1v1h-1zM3 5h1v1h-1zM10 5h1v1h-1zM12 5h1v1h-1zM25 5h1v1h-1zM28 5h1v1h-1zM33 5h1v1h-1zM36 5h1v1h-1zM3 6h1v1h-1zM4 6h1v1h-1zM5 6h1v1h-1zM6 6h1v1h-1zM7 6h1v1h-1zM10 6h1v1h-1zM18 6h1v1h-1zM20 6h1v1h-1zM24 6h1v1h-1zM25 6h1v1h-1zM2 7h1v1h-1zM12 7h1v1h-1zM20 7h1v1h-1zM22 7h1v1h-1zM23 7h1v1h-1zM25 7h1v1h-1zM26 7h1v1h-1zM27 7h1v1h-1zM29 7h1v1h-1zM30 7h1v1h-1zM32 7h1v1h-1zM39 7h1v1h-1zM3 8h1v1h-1zM6 8h1v1h-1zM11 8h1v1h-1zM20 8h1v1h-1zM25 8h1v1h-1zM33 8h1v1h-1zM34 8h1v1h-1zM0 9h1v1h-1zM2 9h1v1h-1zM15 9h1v1h-1zM18 9h1v1h-1zM22 9h1v1h-1zM4 10h1v1h-1zM6 10h1v1h-1zM15 10h1v1h-1zM16 10h1v1h-1zM22 10h1v1h-1zM31 10h1v1h-1zM34 10h1v1h-1zM37 10h1v1h-1zM11 11h1v1h-1zM17 11h1v1h-1zM20 11h1v1h-1zM23 11h1v1h-1zM25 11h1v1h-1zM33 11h1v1h-1zM34 11h1v1h-1zM3 12h1v1h-1zM14 12h1v1h-1zM16 12h1v1h-1zM17 12h1v1h-1zM20 12h1v1h-1zM21 12h1v1h-1zM27 12h1v1h-1zM29 12h1v1h-1zM35 12h1v1h-1zM10 13h1v1h-1zM16 13h1v1h-1zM18 13h1v1h-1zM25 13h1v1h-1zM28 13h1v1h-1zM31 13h1v1h-1zM37 13h1v1h-1zM10 14h1v1h-1zM11 14h1v1h-1zM12 14h1v1h-1zM14 14h1v1h-1zM24 14h1v1h-1zM32 14h1v1h-1zM35 14h1v1h-1zM37 14h1v1h-1zM39 14h1v1h-1zM1 15h1v1h-1zM2 15h1v1h-1zM3 15h1v1h-1zM4 15h1v1h-1zM6 15h1v1h-1zM7 15h1v1h-1zM11 15h1v1h-1zM14 15h1v1h-1zM17 15h1v1h-1zM19 15h1v1h-1zM22 15h1v1h-1zM23 15h1v1h-1zM35 15h1v1h-1zM39 15h1v1h-1zM0 16h1v1h-1zM1 16h1v1h-1zM2 16h1v1h-1zM3 16h1v1h-1zM4 16h1v1h-1zM13 16h1v1h-1zM17 16h1v1h-1zM20 16h1v1h-1zM25 16h1v1h-1zM37 16h1v1h-1zM3 17h1v1h-1zM5 17h1v1h-1zM9 17h1v1h-1zM20 17h1v1h-1zM23 17h1v1h-1zM25 17h1v1h-1zM26 17h1v1h-1zM29 17h1v1h-1zM30 17h1v1h-1zM33 17h1v1h-1zM3 18h1v1h-1zM4 18h1v1h-1zM5 18h1v1h-1zM7 18h1v1h-1zM8 18h1v1h-1zM10 18h1v1h-1zM12 18h1v1h-1zM23 18h1v1h-1zM31 18h1v1h-1zM34 18h1v1h-1zM5 19h1v1h-1zM7 19h1v1h-1zM26 19h1v1h-1zM27 19h1v1h-1zM32 19h1v1h-1zM0 20h1v1h-1zM3 20h1v1h-1zM4 20h1v1h-1zM11 20h1v1h-1zM25 20h1v1h-1zM26 20h1v1h-1zM29 20h1v1h-1zM30 20h1v1h-1zM37 20h1v1h-1zM38 20h1v1h-1zM39 20h1v1h-1zM2 21h1v1h-1zM4 21h1v1h-1zM10 21h1v1h-1zM17 21h1v1h-1zM24 21h1v1h-1zM25 21h1v1h-1zM36 21h1v1h-1zM37 21h1v1h-1zM7 22h1v1h-1zM15 22h1v1h-1zM22 22h1v1h-1zM29 22h1v1h-1zM31 22h1v1h-1zM1 23h1v1h-1zM4 23h1v1h-1zM6 23h1v1h-1zM7 23h1v1h-1zM13 23h1v1h-1zM16 23h1v1h-1zM21 23h1v1h-1zM24 23h1v1h-1zM26 23h1v1h-1zM30 23h1v1h-1zM31 23h1v1h-1zM33 23h1v1h-1zM34 23h1v1h-1zM37 23h1v1h-1zM1 24h1v1h-1zM5 24h1v1h-1zM6 24h1v1h-1zM7 24h1v1h-1zM10 24h1v1h-1zM11 24h1v1h-1zM21 24h1v1h-1zM35 24h1v1h-1zM38 24h1v1h-1zM1 25h1v1h-1zM5 25h1v1h-1zM6 25h1v1h-1zM13 25h1v1h-1zM16 25h1v1h-1zM31 25h1v1h-1zM6 26h1v1h-1zM10 26h1v1h-1zM29 26h1v1h-1zM33 26h1v1h-1zM34 26h1v1h-1zM37 26h1v1h-1zM7 27h1v1h-1zM13 27h1v1h-1zM16 27h1v1h-1zM17 27h1v1h-1zM19 27h1v1h-1zM21 27h1v1h-1zM29 27h1v1h-1zM32 27h1v1h-1zM36 27h1v1h-1zM37 27h1v1h-1zM8 28h1v1h-1zM10 28h1v1h-1zM14 28h1v1h-1zM26 28h1v1h-1zM35 28h1v1h-1zM38 28h1v1h-1zM3 29h1v1h-1zM7 29h1v1h-1zM8 29h1v1h-1zM13 29h1v1h-1zM16 29h1v1h-1zM21 29h1v1h-1zM30 29h1v1h-1zM37 29h1v1h-1zM11 30h1v1h-1zM16 30h1v1h-1zM27 30h1v1h-1zM38 30h1v1h-1zM8 31h1v1h-1zM12 31h1v1h-1zM14 31h1v1h-1zM17 31h1v1h-1zM18 31h1v1h-1zM22 31h1v1h-1zM23 31h1v1h-1zM29 31h1v1h-1zM33 31h1v1h-1zM39 31h1v1h-1zM2 32h1v1h-1zM8 32h1v1h-1zM16 32h1v1h-1zM31 32h1v1h-1zM32 32h1v1h-1zM1 33h1v1h-1zM6 33h1v1h-1zM11 33h1v1h-1zM15 33h1v1h-1zM16 33h1v1h-1zM19 33h1v1h-1zM20 33h1v1h-1zM21 33h1v1h-1zM29 33h1v1h-1zM32 33h1v1h-1zM33 33h1v1h-1zM37 33h1v1h-1zM10 34h1v1h-1zM16 34h1v1h-1zM17 34h1v1h-1zM19 34h1v1h-1zM29 34h1v1h-1zM32 34h1v1h-1zM37 34h1v1h-1zM39 34h1v1h-1zM2 35h1v1h-1zM8 35h1v1h-1zM10 35h1v1h-1zM14 35h1v1h-1zM20 35h1v1h-1zM22 35h1v1h-1zM24 35h1v1h-1zM26 35h1v1h-1zM27 35h1v1h-1zM33 35h1v1h-1zM37 35h1v1h-1zM38 35h1v1h-1zM7 36h1v1h-1zM20 36h1v1h-1zM25 36h1v1h-1zM26 36h1v1h-1zM27 36h1v1h-1zM34 36h1v1h-1zM2 37h1v1h-1zM6 37h1v1h-1zM17 37h1v1h-1zM22 37h1v1h-1zM25 37h1v1h-1zM32 37h1v1h-1zM0 38h1v1h-1zM6 38h1v1h-1zM25 38h1v1h-1zM28 38h1v1h-1zM33 38h1v1h-1zM35 38h1v1h-1zM4 39h1v1h-1zM11 39h1v1h-1zM13 39h1v1h-1zM16 39h1v1h-1zM18 39h1v1h-1zM29 39h1v1h-1zM30 39h1v1h-1zM39 39h1v1h-1z" fill="#2c2c2c"/></pattern></defs>
<path d="M129.10000000000002,54 H2630.9 A74.10000000000001,57 0 0 1 2705,111 V1686 A74.10000000000001,57 0 0 1 2630.9,1743 H129.10000000000002 A74.10000000000001,57 0 0 1 55,1686 V111 A74.10000000000001,57 0 0 1 129.10000000000002,54 Z" fill="url(#pd)"/>
<path d="M143.5,6 H2616.5 A136.5,105 0 0 1 2753,111 V1686 A136.5,105 0 0 1 2616.5,1791 H143.5 A136.5,105 0 0 1 7,1686 V111 A136.5,105 0 0 1 143.5,6 Z M137.8,25 H2622.2 A111.8,86 0 0 1 2734,111 V1686 A111.8,86 0 0 1 2622.2,1772 H137.8 A111.8,86 0 0 1 26,1686 V111 A111.8,86 0 0 1 137.8,25 Z" fill="url(#pw)" fill-rule="evenodd"/>
<path d="M137.8,25 H2622.2 A111.8,86 0 0 1 2734,111 V1686 A111.8,86 0 0 1 2622.2,1772 H137.8 A111.8,86 0 0 1 26,1686 V111 A111.8,86 0 0 1 137.8,25 Z M133.9,38 H2626.1 A94.9,73 0 0 1 2721,111 V1686 A94.9,73 0 0 1 2626.1,1759 H133.9 A94.9,73 0 0 1 39,1686 V111 A94.9,73 0 0 1 133.9,38 Z" fill="url(#pg1)" fill-rule="evenodd"/>
<path d="M133.9,38 H2626.1 A94.9,73 0 0 1 2721,111 V1686 A94.9,73 0 0 1 2626.1,1759 H133.9 A94.9,73 0 0 1 39,1686 V111 A94.9,73 0 0 1 133.9,38 Z M129.10000000000002,54 H2630.9 A74.10000000000001,57 0 0 1 2705,111 V1686 A74.10000000000001,57 0 0 1 2630.9,1743 H129.10000000000002 A74.10000000000001,57 0 0 1 55,1686 V111 A74.10000000000001,57 0 0 1 129.10000000000002,54 Z" fill="url(#pg2)" fill-rule="evenodd"/>
<rect x="100" y="60" width="2560" height="1600" fill="#ffffff"/>
<line x1="100" y1="159" x2="2660" y2="159" stroke="#dcdcdc" stroke-width="2"/>
<rect x="100" y="160" width="2560" height="90" fill="#f0f0f0"/>
<rect x="100" y="250" width="113" height="1410" fill="#f0f0f0"/>
<line x1="212" y1="251" x2="2660" y2="251" stroke="#dcdcdc" stroke-width="2"/>
<line x1="213" y1="251" x2="213" y2="1660" stroke="#dcdcdc" stroke-width="2"/>
<line x1="853" y1="160" x2="853" y2="1660" stroke="#dcdcdc" stroke-width="2"/>
<defs><linearGradient id="lg" x1="0" y1="1" x2="1" y2="0"><stop offset="0" stop-color="#27aee4"/><stop offset="1" stop-color="#1059b8"/></linearGradient></defs>
<path d="M170.8,102.8 A20,20 0 1 1 164.9,94.3" fill="none" stroke="url(#lg)" stroke-width="3.8"/>
<path d="M136.8,118.7 L142.9,109.6 L149.4,116.3 L155,99.9 L162.8,109.6 L170.4,94.7" fill="none" stroke="#1e1b5e" stroke-width="3.4" stroke-linejoin="miter" stroke-linecap="butt"/>
<text x="189" y="120.5" font-size="32" fill="#0b1f5c" font-weight="bold" textLength="76" lengthAdjust="spacingAndGlyphs">Trend</text>
<text x="265" y="120.5" font-size="32" fill="#0b1f5c" textLength="53" lengthAdjust="spacingAndGlyphs" stroke="#ffffff" stroke-width="0.9">Hub</text>
<path d="M369,104 L387,104 L378,114 Z" fill="#cfcfcf"/>
<line x1="419" y1="60" x2="419" y2="158" stroke="#dcdcdc" stroke-width="2"/>
<circle cx="461" cy="106" r="9.5" fill="none" stroke="#1160c0" stroke-width="4"/>
<line x1="468" y1="113" x2="477" y2="122" stroke="#1160c0" stroke-width="4.5" stroke-linecap="round"/>
<text x="493" y="120.5" font-size="29" fill="#1160c0" textLength="292" lengthAdjust="spacingAndGlyphs">Search tags &amp; attributes</text>
<rect x="1676" y="76" width="118" height="65" fill="#edf3fa" rx="8"/>
<text x="1698" y="118.5" font-size="29" fill="#1160c0" textLength="73" lengthAdjust="spacingAndGlyphs">Home</text>
<text x="1821" y="118.5" font-size="29" fill="#212529" textLength="188" lengthAdjust="spacingAndGlyphs">Work organizer</text>
<text x="2058" y="118.5" font-size="29" fill="#212529" textLength="135" lengthAdjust="spacingAndGlyphs">Monitoring</text>
<line x1="2239" y1="70" x2="2239" y2="148" stroke="#e0e0e0" stroke-width="2"/>
<line x1="2335" y1="70" x2="2335" y2="148" stroke="#e0e0e0" stroke-width="2"/>
<line x1="2433" y1="70" x2="2433" y2="148" stroke="#e0e0e0" stroke-width="2"/>
<path d="M2276,93 h22 a4,4 0 0 1 4,4 v24 a4,4 0 0 1 -4,4 h-8 l-5,5 l-5,-5 h-4 a4,4 0 0 1 -4,-4 v-24 a4,4 0 0 1 4,-4 z" fill="#999"/>
<path d="M2281,103 a6,6 0 1 1 9,5 c-2,1.5 -3,3 -3,6" fill="none" stroke="#fff" stroke-width="3.2"/>
<rect x="2285" y="117" width="4" height="4" fill="#fff"/>
<rect x="2369" y="98" width="30" height="24" fill="none" stroke="#999" stroke-width="3" rx="3"/>
<path d="M2370,100 L2384,110 L2398,100" fill="none" stroke="#999" stroke-width="3"/>
<circle cx="2494" cy="110" r="30" fill="#fcbd12"/>
<text x="2494" y="119" font-size="23" fill="#fff" font-weight="bold" text-anchor="middle" textLength="33" lengthAdjust="spacingAndGlyphs">BH</text>
<text x="2544" y="120.5" font-size="29" fill="#212529" textLength="51" lengthAdjust="spacingAndGlyphs">Bart</text>
<path d="M2609,103 L2630,103 L2619.5,114 Z" fill="#aaa"/>
<rect x="245" y="175" width="62" height="61" fill="#fff" stroke="#dcdcdc" stroke-width="2" rx="8"/>
<path d="M276,192 L291,206 L287,206 L287,218 L280,218 L280,210 L272,210 L272,218 L265,218 L265,206 L261,206 Z" fill="#555"/>
<text x="324" y="214" font-size="28" fill="#212529" font-weight="bold" textLength="310" lengthAdjust="spacingAndGlyphs">CROSS-CORRELATIONS</text>
<circle cx="673" cy="205" r="15" fill="#bdbdbd"/>
<text x="673" y="214" font-size="22" fill="#fff" font-weight="bold" text-anchor="middle">?</text>
<line x1="1077" y1="160" x2="1077" y2="250" stroke="#dcdcdc" stroke-width="2"/>
<line x1="1379" y1="160" x2="1379" y2="250" stroke="#dcdcdc" stroke-width="2"/>
<path d="M901,201 H913" fill="none" stroke="#999" stroke-width="3.6"/>
<path d="M912,194.5 L918.7,201 L912,207.5 Z" fill="#999"/>
<path d="M895,211 H907" fill="none" stroke="#999" stroke-width="3.6"/>
<path d="M895.5,204.3 L889,211 L895.5,217.5 Z" fill="#999"/>
<text x="936" y="214" font-size="28" fill="#212529" textLength="110" lengthAdjust="spacingAndGlyphs" stroke="#212529" stroke-width="0.5">Statistics</text>
<path d="M1127,190 L1142,199 L1127,208 L1112,199 Z" fill="#9a9a9a"/>
<path d="M1113,207 L1127,215.5 L1141,207" fill="none" stroke="#9a9a9a" stroke-width="3.5"/>
<text x="1160" y="214" font-size="28" fill="#212529" textLength="190" lengthAdjust="spacingAndGlyphs" stroke="#212529" stroke-width="0.5">Compare layers</text>
<text x="1828" y="214" font-size="29" fill="#212529" font-weight="bold" textLength="121" lengthAdjust="spacingAndGlyphs">New view</text>
<rect x="2396" y="175" width="63" height="62" fill="#fff" stroke="#dcdcdc" stroke-width="2" rx="8"/>
<circle cx="2427.5" cy="206" r="3.6" fill="#444"/>
<path d="M2421,200.5 a8,8 0 0 0 0,11 M2434,200.5 a8,8 0 0 1 0,11" fill="none" stroke="#444" stroke-width="2"/>
<path d="M2417,197 a12,12 0 0 0 0,18 M2438,197 a12,12 0 0 1 0,18" fill="none" stroke="#444" stroke-width="2"/>
<rect x="2473" y="175" width="170" height="62" fill="#fff" stroke="#dcdcdc" stroke-width="2" rx="8"/>
<text x="2497" y="216" font-size="29" fill="#212529" textLength="92" lengthAdjust="spacingAndGlyphs">Actions</text>
<path d="M2601,201 L2619,201 L2610,210 Z" fill="#888"/>
<rect x="117" y="177" width="78" height="390" fill="#fff" stroke="#dcdcdc" stroke-width="2" rx="8"/>
<line x1="117" y1="255" x2="195" y2="255" stroke="#dcdcdc" stroke-width="2"/>
<line x1="117" y1="333" x2="195" y2="333" stroke="#dcdcdc" stroke-width="2"/>
<line x1="117" y1="411" x2="195" y2="411" stroke="#dcdcdc" stroke-width="2"/>
<line x1="117" y1="489" x2="195" y2="489" stroke="#dcdcdc" stroke-width="2"/>
<rect x="117" y="585" width="78" height="234" fill="#fff" stroke="#dcdcdc" stroke-width="2" rx="8"/>
<line x1="117" y1="663" x2="195" y2="663" stroke="#dcdcdc" stroke-width="2"/>
<line x1="117" y1="741" x2="195" y2="741" stroke="#dcdcdc" stroke-width="2"/>
<rect x="117" y="837" width="78" height="78" fill="#eef4fa" stroke="#dcdcdc" stroke-width="2" rx="8"/>
<rect x="117" y="933" width="78" height="78" fill="#fff" stroke="#dcdcdc" stroke-width="2" rx="8"/>
<path d="M137,197 L151,196 L175,220 Q177,222 175,224 L162,237 Q160,239 158,237 L137,214 Z" fill="#999" stroke="#999" stroke-width="2" stroke-linejoin="round"/>
<circle cx="148.5" cy="208" r="3.6" fill="#fff"/>
<line x1="144" y1="282" x2="169.3" y2="307.8" stroke="#999" stroke-width="3.2" stroke-linecap="round"/>
<line x1="169.3" y1="282" x2="144" y2="307.8" stroke="#999" stroke-width="3.2" stroke-linecap="round"/>
<path d="M156.4,276.3 v9.2 M151.8,280.9 h9.2" fill="none" stroke="#999" stroke-width="2.8"/>
<path d="M151.8,309.3 h9.2" fill="none" stroke="#999" stroke-width="2.8"/>
<path d="M136,295.2 h9" fill="none" stroke="#999" stroke-width="2.8"/>
<circle cx="140.5" cy="290.9" r="1.5" fill="#999"/>
<circle cx="140.5" cy="299.4" r="1.5" fill="#999"/>
<path d="M168.6,291.8 l6.4,6.4 M175,291.8 l-6.4,6.4" fill="none" stroke="#999" stroke-width="2.6"/>
<path d="M156,352 L176,364 L156,376 L136,364 Z" fill="#999"/>
<path d="M137,371 L156,382 L175,371" fill="none" stroke="#999" stroke-width="3"/>
<path d="M137,378 L156,389 L175,378" fill="none" stroke="#999" stroke-width="3"/>
<path d="M141,430 h30 a5,5 0 0 1 5,5 v22 a5,5 0 0 1 -5,5 h-4 l0,8 l-9,-8 h-17 a5,5 0 0 1 -5,-5 v-22 a5,5 0 0 1 5,-5 z" fill="#999"/>
<rect x="136" y="513" width="10" height="30" fill="#999"/>
<rect x="149" y="513" width="27" height="14" fill="#999"/>
<rect x="149" y="530" width="12" height="13" fill="#999"/>
<rect x="164" y="530" width="12" height="13" fill="#999"/>
<circle cx="152" cy="620" r="11" fill="none" stroke="#999" stroke-width="4.5"/>
<line x1="160" y1="628" x2="172" y2="640" stroke="#999" stroke-width="5.5" stroke-linecap="round"/>
<path d="M138,690 Q156,680 174,690 L160,705 L160,718 Q156,720 152,718 L152,705 Z" fill="#999"/>
<path d="M141,690 Q156,697 171,690" fill="none" stroke="#fff" stroke-width="1.5"/>
<path d="M147.6,762.3 Q156,757.5 168.8,767.6" fill="none" stroke="#999" stroke-width="2.6" stroke-linecap="round"/>
<path d="M140.4,769.9 Q152,761 162,766 Q169,771 172,781" fill="none" stroke="#999" stroke-width="2.6" stroke-linecap="round"/>
<path d="M138.4,778.2 Q150,767 160,772 Q168,778 169.5,793" fill="none" stroke="#999" stroke-width="2.6" stroke-linecap="round"/>
<path d="M140.4,788.5 Q143,778 151.2,777.7 Q161,778 162,788 Q162,794 161,798.3" fill="none" stroke="#999" stroke-width="2.6" stroke-linecap="round"/>
<path d="M144.9,795 Q145,783.5 151.2,783.5 Q157,784 157,790 Q157,795 155.7,799.3" fill="none" stroke="#999" stroke-width="2.6" stroke-linecap="round"/>
<path d="M151.4,788.5 Q151,794 149.4,797.8" fill="none" stroke="#999" stroke-width="2.6" stroke-linecap="round"/>
<path d="M156,856 a14,14 0 0 1 14,14 c0,7 -5,10 -7,14 h-14 c-2,-4 -7,-7 -7,-14 a14,14 0 0 1 14,-14 z" fill="#0f5cb9"/>
<path d="M149,887 h14 l-1,5 l-6,4 l-6,-4 z" fill="#0f5cb9"/>
<circle cx="141.5" cy="985" r="5.5" fill="#999"/>
<circle cx="150.5" cy="962" r="5.5" fill="#999"/>
<circle cx="161" cy="980" r="5.5" fill="#999"/>
<line x1="141.5" y1="985" x2="150.5" y2="962" stroke="#999" stroke-width="3"/>
<line x1="150.5" y1="962" x2="161" y2="980" stroke="#999" stroke-width="3"/>
<path d="M163,975 L170,965" fill="none" stroke="#999" stroke-width="2.5" stroke-dasharray="3 3"/>
<circle cx="170.5" cy="956.5" r="4" fill="none" stroke="#999" stroke-width="2"/>
<text x="247" y="312.5" font-size="27" fill="#212529" textLength="324" lengthAdjust="spacingAndGlyphs">Upstream shift (Maximum)</text>
<rect x="248" y="324" width="571" height="61" fill="#fff" stroke="#dcdcdc" stroke-width="2" rx="8"/>
<text x="271" y="364" font-size="27" fill="#212529" textLength="29" lengthAdjust="spacingAndGlyphs">1h</text>
<text x="247" y="445" font-size="27" fill="#212529" textLength="243" lengthAdjust="spacingAndGlyphs">Tag filter expression</text>
<circle cx="514" cy="434" r="13" fill="#bdbdbd"/>
<text x="514" y="442" font-size="19" fill="#fff" font-weight="bold" text-anchor="middle">?</text>
<text x="818" y="442" font-size="24" fill="#999" text-anchor="end" textLength="88" lengthAdjust="spacingAndGlyphs">Optional</text>
<rect x="248" y="456" width="571" height="61" fill="#fff" stroke="#dcdcdc" stroke-width="2" rx="8"/>
<text x="271" y="497" font-size="27" fill="#6c7784" textLength="172" lengthAdjust="spacingAndGlyphs">E.g. temp-rea*</text>
<rect x="248" y="543" width="30" height="31" fill="#fff" stroke="#cfcfcf" stroke-width="2" rx="6"/>
<text x="293" y="568" font-size="27" fill="#212529" textLength="334" lengthAdjust="spacingAndGlyphs">Search only early indicators</text>
<text x="295" y="608" font-size="24" fill="#9a9a9a" textLength="469" lengthAdjust="spacingAndGlyphs">Early indicators are candidates with a shift of</text>
<text x="295" y="641" font-size="24" fill="#9a9a9a" textLength="296" lengthAdjust="spacingAndGlyphs">minimal 10% of the window.</text>
<text x="246" y="718" font-size="24" fill="#212529" textLength="256" lengthAdjust="spacingAndGlyphs" stroke="#212529" stroke-width="0.5">PERIOD FOR ANALYSIS</text>
<line x1="526" y1="709" x2="820" y2="709" stroke="#dcdcdc" stroke-width="2"/>
<defs><filter id="sh" x="-5%" y="-5%" width="110%" height="110%"><feGaussianBlur stdDeviation="4"/></filter></defs>
<rect x="246" y="748" width="574" height="375" fill="#000" opacity="0.08" filter="url(#sh)"/>
<rect x="246" y="746" width="574" height="374" fill="#fff"/>
<rect x="246" y="746" width="10" height="371" fill="#1160c0"/>
<text x="297" y="815.0" font-size="30" fill="#212529" textLength="421" lengthAdjust="spacingAndGlyphs" stroke="#212529" stroke-width="0.9">Correlations will be calculated</text>
<text x="297" y="852.5" font-size="30" fill="#212529" textLength="442" lengthAdjust="spacingAndGlyphs" stroke="#212529" stroke-width="0.9">based on the time period of the</text>
<text x="297" y="890.0" font-size="30" fill="#212529" textLength="163" lengthAdjust="spacingAndGlyphs" stroke="#212529" stroke-width="0.9">focus chart.</text>
<text x="297" y="950" font-size="27" fill="#9a9a9a" textLength="466" lengthAdjust="spacingAndGlyphs">This takes into account the time filters</text>
<text x="297" y="989" font-size="27" fill="#9a9a9a" textLength="465" lengthAdjust="spacingAndGlyphs">and layers. Consider adding additional</text>
<text x="297" y="1028" font-size="27" fill="#9a9a9a" textLength="386" lengthAdjust="spacingAndGlyphs">layers showing similar events to</text>
<text x="297" y="1067" font-size="27" fill="#9a9a9a" textLength="255" lengthAdjust="spacingAndGlyphs">improve your results.</text>
<rect x="840" y="876" width="29" height="101" fill="#fff" stroke="#dcdcdc" stroke-width="2" rx="6"/>
<line x1="840" y1="947" x2="869" y2="947" stroke="#dcdcdc" stroke-width="2"/>
<line x1="857" y1="888" x2="857" y2="932" stroke="#999" stroke-width="2"/>
<path d="M848,956 l9,12 M857,956 l-9,12" fill="none" stroke="#bbb" stroke-width="1.5"/>
<line x1="214" y1="258.0" x2="854" y2="258.0" stroke="#7000ff" stroke-width="4" stroke-dasharray="12.00 8.00 24.00 8.00 24.00 8.00 24.00 8.00 24.00 8.00 24.00 8.00 24.00 8.00 24.00 8.00 24.00 8.00 24.00 8.00 24.00 8.00 24.00 8.00 24.00 8.00 24.00 8.00 24.00 8.00 24.00 8.00 24.00 8.00 24.00 8.00 24.00 8.00 24.00 8.00 12.00 0"/>
<line x1="214" y1="1117.0" x2="854" y2="1117.0" stroke="#7000ff" stroke-width="4" stroke-dasharray="12.00 8.00 24.00 8.00 24.00 8.00 24.00 8.00 24.00 8.00 24.00 8.00 24.00 8.00 24.00 8.00 24.00 8.00 24.00 8.00 24.00 8.00 24.00 8.00 24.00 8.00 24.00 8.00 24.00 8.00 24.00 8.00 24.00 8.00 24.00 8.00 24.00 8.00 24.00 8.00 12.00 0"/>
<line x1="216.0" y1="256" x2="216.0" y2="1119" stroke="#7000ff" stroke-width="4" stroke-dasharray="11.99 7.99 23.97 7.99 23.97 7.99 23.97 7.99 23.97 7.99 23.97 7.99 23.97 7.99 23.97 7.99 23.97 7.99 23.97 7.99 23.97 7.99 23.97 7.99 23.97 7.99 23.97 7.99 23.97 7.99 23.97 7.99 23.97 7.99 23.97 7.99 23.97 7.99 23.97 7.99 23.97 7.99 23.97 7.99 23.97 7.99 23.97 7.99 23.97 7.99 23.97 7.99 23.97 7.99 11.99 0"/>
<line x1="852.0" y1="256" x2="852.0" y2="1119" stroke="#7000ff" stroke-width="4" stroke-dasharray="11.99 7.99 23.97 7.99 23.97 7.99 23.97 7.99 23.97 7.99 23.97 7.99 23.97 7.99 23.97 7.99 23.97 7.99 23.97 7.99 23.97 7.99 23.97 7.99 23.97 7.99 23.97 7.99 23.97 7.99 23.97 7.99 23.97 7.99 23.97 7.99 23.97 7.99 23.97 7.99 23.97 7.99 23.97 7.99 23.97 7.99 23.97 7.99 23.97 7.99 23.97 7.99 23.97 7.99 11.99 0"/>
<rect x="326" y="224" width="414" height="64" fill="#7000ff" rx="10"/>
<text x="344" y="267.5" font-size="31" fill="#fff" font-weight="bold" textLength="377" lengthAdjust="spacingAndGlyphs">Cross-correlations settings</text>
<rect x="246" y="1148" width="574" height="80" fill="#011e5e" rx="6"/>
<text x="467" y="1200" font-size="32" fill="#fff" font-weight="bold" textLength="131" lengthAdjust="spacingAndGlyphs">Diagnose</text>
<line x1="242" y1="1146.0" x2="824" y2="1146.0" stroke="#7000ff" stroke-width="4" stroke-dasharray="12.12 8.08 24.25 8.08 24.25 8.08 24.25 8.08 24.25 8.08 24.25 8.08 24.25 8.08 24.25 8.08 24.25 8.08 24.25 8.08 24.25 8.08 24.25 8.08 24.25 8.08 24.25 8.08 24.25 8.08 24.25 8.08 24.25 8.08 24.25 8.08 12.12 0"/>
<line x1="242" y1="1230.0" x2="824" y2="1230.0" stroke="#7000ff" stroke-width="4" stroke-dasharray="12.12 8.08 24.25 8.08 24.25 8.08 24.25 8.08 24.25 8.08 24.25 8.08 24.25 8.08 24.25 8.08 24.25 8.08 24.25 8.08 24.25 8.08 24.25 8.08 24.25 8.08 24.25 8.08 24.25 8.08 24.25 8.08 24.25 8.08 24.25 8.08 12.12 0"/>
<line x1="244.0" y1="1144" x2="244.0" y2="1232" stroke="#7000ff" stroke-width="4" stroke-dasharray="11.00 7.33 22.00 7.33 22.00 7.33 11.00 0"/>
<line x1="822.0" y1="1144" x2="822.0" y2="1232" stroke="#7000ff" stroke-width="4" stroke-dasharray="11.00 7.33 22.00 7.33 22.00 7.33 11.00 0"/>
<rect x="937" y="284" width="171" height="46" fill="#fff" stroke="#dcdcdc" stroke-width="2" rx="6"/>
<circle cx="954" cy="306" r="9.5" fill="#c8105e"/>
<text x="973" y="313.5" font-size="20" fill="#212529" textLength="96" lengthAdjust="spacingAndGlyphs">BA:TEMP.1</text>
<path d="M1078,306 h22 M1089,295 v22" fill="none" stroke="#333" stroke-width="2"/>
<path d="M1078,306 l4,-4 v8 z M1100,306 l-4,-4 v8 z M1089,295 l-4,4 h8 z M1089,317 l-4,-4 h8 z" fill="#333" stroke="#333" stroke-width="1"/>
<rect x="937" y="636" width="177" height="46" fill="#fff" stroke="#dcdcdc" stroke-width="2" rx="6"/>
<circle cx="954" cy="658" r="9.5" fill="#14679a"/>
<text x="973" y="665.5" font-size="20" fill="#212529" textLength="103" lengthAdjust="spacingAndGlyphs">BA:LEVEL.1</text>
<path d="M1084,658 h22 M1095,647 v22" fill="none" stroke="#333" stroke-width="2"/>
<path d="M1084,658 l4,-4 v8 z M1106,658 l-4,-4 v8 z M1095,647 l-4,4 h8 z M1095,669 l-4,-4 h8 z" fill="#333" stroke="#333" stroke-width="1"/>
<rect x="937" y="988" width="178" height="46" fill="#fff" stroke="#dcdcdc" stroke-width="2" rx="6"/>
<circle cx="954" cy="1010" r="9.5" fill="#2a8a0c"/>
<text x="973" y="1017.5" font-size="20" fill="#212529" textLength="104" lengthAdjust="spacingAndGlyphs">BA:CONC.1</text>
<path d="M1085,1010 h22 M1096,999 v22" fill="none" stroke="#333" stroke-width="2"/>
<path d="M1085,1010 l4,-4 v8 z M1107,1010 l-4,-4 v8 z M1096,999 l-4,4 h8 z M1096,1021 l-4,-4 h8 z" fill="#333" stroke="#333" stroke-width="1"/>
<line x1="936" y1="347.7" x2="936" y2="620" stroke="#c8105e" stroke-width="2"/>
<line x1="924" y1="347.69" x2="936" y2="347.69" stroke="#c8105e" stroke-width="2"/>
<text x="917" y="354.19" font-size="18" fill="#212529" text-anchor="end">43.5</text>
<line x1="924" y1="369.6" x2="936" y2="369.6" stroke="#c8105e" stroke-width="2"/>
<text x="917" y="376.1" font-size="18" fill="#212529" text-anchor="end">40</text>
<line x1="924" y1="432.2" x2="936" y2="432.2" stroke="#c8105e" stroke-width="2"/>
<text x="917" y="438.7" font-size="18" fill="#212529" text-anchor="end">30</text>
<line x1="924" y1="494.8" x2="936" y2="494.8" stroke="#c8105e" stroke-width="2"/>
<text x="917" y="501.3" font-size="18" fill="#212529" text-anchor="end">20</text>
<line x1="924" y1="557.4" x2="936" y2="557.4" stroke="#c8105e" stroke-width="2"/>
<text x="917" y="563.9" font-size="18" fill="#212529" text-anchor="end">10</text>
<line x1="924" y1="620.0" x2="936" y2="620.0" stroke="#c8105e" stroke-width="2"/>
<text x="917" y="626.5" font-size="18" fill="#212529" text-anchor="end">0</text>
<line x1="936" y1="699.4" x2="936" y2="971.5" stroke="#14679a" stroke-width="2"/>
<line x1="924" y1="699.052" x2="936" y2="699.052" stroke="#14679a" stroke-width="2"/>
<text x="917" y="705.552" font-size="18" fill="#212529" text-anchor="end">39.6</text>
<line x1="924" y1="765.1" x2="936" y2="765.1" stroke="#14679a" stroke-width="2"/>
<text x="917" y="771.6" font-size="18" fill="#212529" text-anchor="end">30</text>
<line x1="924" y1="833.9" x2="936" y2="833.9" stroke="#14679a" stroke-width="2"/>
<text x="917" y="840.4" font-size="18" fill="#212529" text-anchor="end">20</text>
<line x1="924" y1="902.7" x2="936" y2="902.7" stroke="#14679a" stroke-width="2"/>
<text x="917" y="909.2" font-size="18" fill="#212529" text-anchor="end">10</text>
<line x1="924" y1="971.5" x2="936" y2="971.5" stroke="#14679a" stroke-width="2"/>
<text x="917" y="978.0" font-size="18" fill="#212529" text-anchor="end">0</text>
<line x1="936" y1="1050.5" x2="936" y2="1324.4" stroke="#2a8a0c" stroke-width="2"/>
<line x1="924" y1="1050.5" x2="936" y2="1050.5" stroke="#2a8a0c" stroke-width="2"/>
<text x="917" y="1057.0" font-size="18" fill="#212529" text-anchor="end">41.5</text>
<line x1="924" y1="1126.4" x2="936" y2="1126.4" stroke="#2a8a0c" stroke-width="2"/>
<text x="917" y="1132.9" font-size="18" fill="#212529" text-anchor="end">30</text>
<line x1="924" y1="1192.4" x2="936" y2="1192.4" stroke="#2a8a0c" stroke-width="2"/>
<text x="917" y="1198.9" font-size="18" fill="#212529" text-anchor="end">20</text>
<line x1="924" y1="1258.4" x2="936" y2="1258.4" stroke="#2a8a0c" stroke-width="2"/>
<text x="917" y="1264.9" font-size="18" fill="#212529" text-anchor="end">10</text>
<line x1="924" y1="1323.74" x2="936" y2="1323.74" stroke="#2a8a0c" stroke-width="2"/>
<text x="917" y="1330.24" font-size="18" fill="#212529" text-anchor="end">0.1</text>
<line x1="924" y1="1060.4" x2="936" y2="1060.4" stroke="#9fd08a" stroke-width="2"/>
<text x="917" y="1066.9" font-size="18" fill="#aaa" text-anchor="end">40</text>
<path d="M936.0,620.0 L1000.2,619.8 L1014.8,609.0 L1042.5,601.0 L1057.0,591.7 L1086.0,583.0 L1100.0,576.0 L1114.0,567.0 L1128.6,558.5 L1142.8,553.0 L1171.0,548.7 L1185.4,534.5 L1199.6,528.5 L1214.0,529.7 L1228.5,522.6 L1242.3,512.3 L1284.6,501.3 L1299.0,502.9 L1313.4,495.8 L1341.8,498.0 L1356.4,496.5 L1370.3,504.0 L1384.5,496.0 L1399.0,500.5 L1413.0,497.0 L1427.0,501.7 L1441.0,496.0 L1455.6,502.5 L1470.0,501.0 L1484.0,503.6 L1498.6,497.0 L1512.5,501.7 L1527.5,499.7 L1541.3,504.8 L1555.0,501.0 L1569.7,501.3 L1584.0,498.0 L1598.6,501.7 L1626.0,503.0 L1640.8,497.7 L1669.6,498.5 L1683.5,502.5 L1697.3,504.0 L1726.0,497.0 L1740.0,504.0 L1754.5,497.7 L1769.0,504.0 L1783.4,499.0 L1796.8,495.8 L1825.6,502.5 L1854.0,504.4 L1868.6,499.1 L1882.8,496.5 L1897.0,499.9 L1910.9,496.9 L1925.1,498.8 L1939.7,496.9 L1953.9,499.9 L1968.1,499.1 L1982.0,500.6 L2026.0,498.8 L2054.1,503.2 L2109.0,499.9 L2124.0,500.3 L2167.0,473.3 L2181.3,467.0 L2195.9,450.9 L2224.3,435.6 L2238.9,422.1 L2266.2,409.8 L2281.1,396.7 L2295.3,391.4 L2309.9,376.1 L2338.0,359.3 L2352.2,347.3 L2367.1,363.0 L2381.0,372.0 L2394.8,372.7 L2409.8,386.9 L2423.2,390.3 L2438.2,406.4 L2452.0,409.0 L2466.2,422.8 L2480.4,432.6 L2494.3,433.3 L2508.5,449.8 L2522.3,458.7 L2536.5,464.4 L2551.1,473.3 L2579.5,484.5 L2594.5,498.4 L2606.5,503.2 L2622.6,510.7 L2637.5,527.9 L2643.9,529.8" fill="none" stroke="#c8105e" stroke-width="2.1" stroke-linejoin="round"/>
<path d="M936.0,971.5 L1000.2,971.6 L1014.2,968.6 L1028.6,959.1 L1043.0,956.5 L1057.0,943.6 L1072.1,938.7 L1086.1,928.5 L1099.7,928.5 L1142.0,910.0 L1157.2,895.6 L1171.6,891.0 L1199.5,875.5 L1213.9,874.0 L1228.3,865.7 L1242.3,861.9 L1257.4,850.2 L1285.8,838.1 L1299.8,831.3 L1314.1,829.0 L1327.4,835.8 L1355.8,837.7 L1370.1,834.7 L1385.2,834.7 L1399.2,830.5 L1442.0,837.3 L1498.3,835.1 L1512.7,822.2 L1527.8,821.1 L1541.1,824.5 L1555.4,820.3 L1570.2,812.0 L1584.6,816.2 L1598.6,803.7 L1613.0,805.6 L1627.0,802.9 L1655.7,791.2 L1669.7,796.5 L1684.0,784.4 L1698.0,787.4 L1726.4,782.1 L1740.4,778.3 L1754.8,770.8 L1768.8,771.9 L1796.8,767.1 L1811.8,758.2 L1854.0,752.6 L1868.6,744.7 L1897.0,739.1 L1925.1,732.4 L1939.7,736.1 L1953.9,729.7 L1968.1,731.6 L1982.0,723.4 L1996.2,723.4 L2010.7,716.6 L2025.0,717.8 L2039.2,710.7 L2054.1,712.2 L2068.0,701.7 L2082.2,700.6 L2096.0,708.0 L2139.0,702.1 L2153.2,705.4 L2167.0,703.2 L2181.3,708.8 L2195.9,702.4 L2210.0,699.4 L2224.3,703.9 L2238.9,703.9 L2253.1,707.7 L2295.3,703.2 L2309.9,703.9 L2324.1,699.8 L2338.0,706.2 L2352.2,703.6 L2381.0,706.2 L2394.8,713.7 L2409.8,718.9 L2423.2,715.5 L2438.2,724.9 L2452.0,722.6 L2466.2,733.9 L2480.4,732.4 L2494.3,736.5 L2508.5,734.6 L2536.5,749.2 L2551.1,754.4 L2565.3,752.6 L2579.5,756.7 L2594.5,763.0 L2608.3,765.6 L2622.6,765.3 L2637.5,770.9 L2643.9,770.9" fill="none" stroke="#14679a" stroke-width="2.1" stroke-linejoin="round"/>
<path d="M936.2,1323.7 L1014.0,1323.7 L1042.5,1313.9 L1057.5,1317.4 L1085.1,1302.8 L1114.0,1304.4 L1128.6,1296.5 L1142.4,1294.9 L1157.0,1282.7 L1184.6,1285.4 L1213.5,1277.1 L1227.3,1269.2 L1270.7,1270.0 L1299.2,1251.9 L1328.0,1247.5 L1341.8,1250.7 L1356.4,1241.6 L1399.1,1238.0 L1412.9,1222.6 L1427.5,1227.0 L1441.4,1221.8 L1455.6,1225.8 L1484.0,1218.3 L1498.6,1205.2 L1527.5,1205.6 L1541.3,1194.6 L1584.0,1195.0 L1598.6,1201.7 L1612.4,1197.0 L1655.0,1198.1 L1683.5,1185.9 L1740.0,1195.4 L1754.5,1192.6 L1769.2,1198.1 L1783.7,1190.0 L1797.6,1194.6 L1811.8,1193.8 L1825.6,1181.8 L1882.8,1183.3 L1897.0,1188.6 L1925.1,1188.6 L1939.7,1178.9 L1953.9,1191.6 L1982.0,1185.2 L1996.2,1176.6 L2010.7,1186.7 L2025.0,1174.7 L2039.2,1187.8 L2054.1,1187.5 L2068.0,1180.4 L2082.2,1186.7 L2096.0,1174.0 L2110.2,1172.1 L2124.1,1185.2 L2139.0,1173.2 L2153.2,1183.3 L2167.0,1177.7 L2181.3,1180.7 L2210.0,1177.4 L2224.3,1160.5 L2324.1,1130.6 L2338.0,1121.3 L2352.2,1105.6 L2367.1,1110.8 L2381.0,1093.6 L2394.8,1097.3 L2409.8,1083.1 L2423.2,1086.1 L2438.2,1074.1 L2452.0,1077.1 L2466.2,1066.7 L2494.3,1056.6 L2508.5,1059.2 L2536.5,1056.6 L2551.1,1065.9 L2579.5,1067.4 L2608.3,1052.8 L2622.6,1051.7 L2637.5,1059.2 L2643.9,1056.6" fill="none" stroke="#2a8a0c" stroke-width="2.1" stroke-linejoin="round"/>
<line x1="935" y1="1331" x2="2645" y2="1331" stroke="#212529" stroke-width="2"/>
<line x1="936" y1="1331" x2="936" y2="1339" stroke="#212529" stroke-width="2"/>
<line x1="2644" y1="1331" x2="2644" y2="1339" stroke="#212529" stroke-width="2"/>
<line x1="986.4" y1="1331" x2="986.4" y2="1339" stroke="#212529" stroke-width="2"/>
<text x="986.4" y="1359.5" font-size="18.5" fill="#212529" text-anchor="middle" textLength="50" lengthAdjust="spacingAndGlyphs">07:55</text>
<line x1="1128.6" y1="1331" x2="1128.6" y2="1339" stroke="#212529" stroke-width="2"/>
<text x="1128.6" y="1359.5" font-size="18.5" fill="#212529" text-anchor="middle" textLength="50" lengthAdjust="spacingAndGlyphs">08:00</text>
<line x1="1270.8" y1="1331" x2="1270.8" y2="1339" stroke="#212529" stroke-width="2"/>
<text x="1270.8" y="1359.5" font-size="18.5" fill="#212529" text-anchor="middle" textLength="50" lengthAdjust="spacingAndGlyphs">08:05</text>
<line x1="1413.0" y1="1331" x2="1413.0" y2="1339" stroke="#212529" stroke-width="2"/>
<text x="1413.0" y="1359.5" font-size="18.5" fill="#212529" text-anchor="middle" textLength="50" lengthAdjust="spacingAndGlyphs">08:10</text>
<line x1="1555.1999999999998" y1="1331" x2="1555.1999999999998" y2="1339" stroke="#212529" stroke-width="2"/>
<text x="1555.1999999999998" y="1359.5" font-size="18.5" fill="#212529" text-anchor="middle" textLength="50" lengthAdjust="spacingAndGlyphs">08:15</text>
<line x1="1697.4" y1="1331" x2="1697.4" y2="1339" stroke="#212529" stroke-width="2"/>
<text x="1697.4" y="1359.5" font-size="18.5" fill="#212529" text-anchor="middle" textLength="50" lengthAdjust="spacingAndGlyphs">08:20</text>
<line x1="1839.6" y1="1331" x2="1839.6" y2="1339" stroke="#212529" stroke-width="2"/>
<text x="1839.6" y="1359.5" font-size="18.5" fill="#212529" text-anchor="middle" textLength="50" lengthAdjust="spacingAndGlyphs">08:25</text>
<line x1="1981.7999999999997" y1="1331" x2="1981.7999999999997" y2="1339" stroke="#212529" stroke-width="2"/>
<text x="1981.7999999999997" y="1359.5" font-size="18.5" fill="#212529" text-anchor="middle" textLength="50" lengthAdjust="spacingAndGlyphs">08:30</text>
<line x1="2124.0" y1="1331" x2="2124.0" y2="1339" stroke="#212529" stroke-width="2"/>
<text x="2124.0" y="1359.5" font-size="18.5" fill="#212529" text-anchor="middle" textLength="50" lengthAdjust="spacingAndGlyphs">08:35</text>
<line x1="2266.2" y1="1331" x2="2266.2" y2="1339" stroke="#212529" stroke-width="2"/>
<text x="2266.2" y="1359.5" font-size="18.5" fill="#212529" text-anchor="middle" textLength="50" lengthAdjust="spacingAndGlyphs">08:40</text>
<line x1="2408.4" y1="1331" x2="2408.4" y2="1339" stroke="#212529" stroke-width="2"/>
<text x="2408.4" y="1359.5" font-size="18.5" fill="#212529" text-anchor="middle" textLength="50" lengthAdjust="spacingAndGlyphs">08:45</text>
<line x1="2550.6" y1="1331" x2="2550.6" y2="1339" stroke="#212529" stroke-width="2"/>
<text x="2550.6" y="1359.5" font-size="18.5" fill="#212529" text-anchor="middle" textLength="50" lengthAdjust="spacingAndGlyphs">08:50</text>
<rect x="2580" y="268" width="64" height="64" fill="#0f5cb9" rx="6"/>
<path d="M2623.78,297.33 L2627.61,298.01 L2627.61,304.99 L2623.78,305.67 L2623.28,306.89 L2625.51,310.07 L2620.57,315.01 L2617.39,312.78 L2616.17,313.28 L2615.49,317.11 L2608.51,317.11 L2607.83,313.28 L2606.61,312.78 L2603.43,315.01 L2598.49,310.07 L2600.72,306.89 L2600.22,305.67 L2596.39,304.99 L2596.39,298.01 L2600.22,297.33 L2600.72,296.11 L2598.49,292.93 L2603.43,287.99 L2606.61,290.22 L2607.83,289.72 L2608.51,285.89 L2615.49,285.89 L2616.17,289.72 L2617.39,290.22 L2620.57,287.99 L2625.51,292.93 L2623.28,296.11 Z" fill="#fff"/>
<circle cx="2612" cy="301.5" r="5.2" fill="#0f5cb9"/>
<rect x="937" y="1382" width="62" height="60" fill="#fff" stroke="#dcdcdc" stroke-width="2" rx="7"/>
<path d="M963,1413 L971,1406 L971,1420 Z" fill="#444"/>
<rect x="1009" y="1382" width="63" height="60" fill="#fff" stroke="#dcdcdc" stroke-width="2" rx="7"/>
<rect x="1027.5" y="1402" width="26" height="24" fill="none" stroke="#a0a0a0" stroke-width="2.6" rx="2"/>
<line x1="1027.5" y1="1408" x2="1053.5" y2="1408" stroke="#a0a0a0" stroke-width="2.6"/>
<line x1="1033.5" y1="1398" x2="1033.5" y2="1404" stroke="#a0a0a0" stroke-width="2.6"/>
<line x1="1047.5" y1="1398" x2="1047.5" y2="1404" stroke="#a0a0a0" stroke-width="2.6"/>
<rect x="1043.5" y="1416" width="7" height="7" fill="#a0a0a0"/>
<rect x="1083" y="1382" width="64" height="60" fill="#fff" stroke="#c9d0d9" stroke-width="2" rx="7"/>
<circle cx="1115" cy="1412" r="13.5" fill="none" stroke="#a0a0a0" stroke-width="2.6"/>
<path d="M1115,1404 V1412 H1122" fill="none" stroke="#a0a0a0" stroke-width="2.6"/>
<rect x="1621" y="1382" width="62" height="60" fill="#fff" stroke="#dcdcdc" stroke-width="2" rx="7"/>
<path d="M1636,1398 V1430 H1668" fill="none" stroke="#666" stroke-width="2"/>
<path d="M1637,1416 Q1648,1410 1652,1405 Q1658,1398 1665,1399" fill="none" stroke="#666" stroke-width="2.2"/>
<path d="M1638,1428 H1646 V1424 H1652 V1420 H1658 V1416 H1664" fill="none" stroke="#666" stroke-width="2"/>
<rect x="1693" y="1382" width="193" height="60" fill="#fff" stroke="#dcdcdc" stroke-width="2" rx="7"/>
<line x1="1825" y1="1381" x2="1825" y2="1443" stroke="#dcdcdc" stroke-width="2"/>
<text x="1719" y="1422" font-size="28" fill="#212529" textLength="80" lengthAdjust="spacingAndGlyphs">1 hour</text>
<rect x="1845.5" y="1412" width="19" height="14" fill="none" stroke="#333" stroke-width="3" rx="2"/>
<path d="M1849,1412 V1406 a6,6 0 0 1 12,0 V1407" fill="none" stroke="#333" stroke-width="3"/>
<circle cx="1855" cy="1419" r="2.4" fill="#333"/>
<rect x="1897" y="1382" width="62" height="60" fill="#fff" stroke="#dcdcdc" stroke-width="2" rx="7"/>
<path d="M1916,1413 a12,12 0 1 0 3.5,-8.5" fill="none" stroke="#444" stroke-width="3"/>
<path d="M1914,1402 L1919.5,1411 L1925,1403 Z" fill="#444"/>
<path d="M1928,1406 V1414 L1934,1418" fill="none" stroke="#444" stroke-width="2.6"/>
<rect x="2444" y="1382" width="62" height="60" fill="#fff" stroke="#dcdcdc" stroke-width="2" rx="7"/>
<rect x="2462" y="1402" width="26" height="24" fill="none" stroke="#a0a0a0" stroke-width="2.6" rx="2"/>
<line x1="2462" y1="1408" x2="2488" y2="1408" stroke="#a0a0a0" stroke-width="2.6"/>
<line x1="2468" y1="1398" x2="2468" y2="1404" stroke="#a0a0a0" stroke-width="2.6"/>
<line x1="2482" y1="1398" x2="2482" y2="1404" stroke="#a0a0a0" stroke-width="2.6"/>
<rect x="2478" y="1416" width="7" height="7" fill="#a0a0a0"/>
<rect x="2517" y="1382" width="64" height="60" fill="#fff" stroke="#c9d0d9" stroke-width="2" rx="7"/>
<circle cx="2549" cy="1412" r="13.5" fill="none" stroke="#a0a0a0" stroke-width="2.6"/>
<path d="M2549,1404 V1412 H2556" fill="none" stroke="#a0a0a0" stroke-width="2.6"/>
<rect x="2582" y="1382" width="60" height="60" fill="#fff" stroke="#dcdcdc" stroke-width="2" rx="7"/>
<path d="M2617,1413 L2609,1406 L2609,1420 Z" fill="#333"/>
<line x1="936" y1="1460.5" x2="2643" y2="1460.5" stroke="#dcdcdc" stroke-width="2"/>
<line x1="936" y1="1519.5" x2="2643" y2="1519.5" stroke="#dcdcdc" stroke-width="2"/>
<path d="M936.0,1466.2 L940.9,1513.7 L945.3,1464.3 L949.7,1516.3 L953.5,1463.6 L958.1,1510.3 L963.1,1467.6 L966.7,1510.1 L970.1,1464.3 L973.5,1513.7 L978.3,1466.6 L982.5,1515.3 L986.4,1470.0 L991.1,1515.7 L994.9,1465.0 L999.5,1513.2 L1003.5,1469.7 L1006.9,1511.7 L1011.0,1469.9 L1014.5,1515.0 L1018.3,1463.6 L1023.3,1516.1 L1027.1,1463.7 L1031.8,1511.4 L1035.9,1464.3 L1039.5,1515.1 L1043.5,1464.5 L1048.5,1516.4 L1053.4,1464.5 L1058.2,1515.1 L1063.2,1464.5 L1067.9,1512.6 L1071.3,1463.6 L1075.1,1514.8 L1079.2,1469.7 L1083.6,1516.9 L1087.2,1469.4 L1091.0,1511.5 L1095.9,1464.4 L1100.7,1514.8 L1104.3,1463.3 L1108.0,1515.6 L1112.8,1467.2 L1116.4,1515.8 L1120.2,1466.9 L1124.6,1512.2 L1128.3,1463.1 L1132.4,1510.5 L1136.4,1467.0 L1140.3,1517.1 L1144.8,1467.8 L1148.4,1511.0 L1152.9,1498.6 L1157.1,1515.8 L1162.1,1463.5 L1166.7,1517.2 L1171.3,1468.6 L1175.2,1515.5 L1180.0,1465.9 L1184.9,1514.6 L1188.9,1467.1 L1192.4,1515.1 L1197.2,1468.1 L1201.8,1514.6 L1206.6,1463.6 L1210.0,1514.8 L1213.7,1467.9 L1218.1,1517.4 L1221.5,1465.1 L1225.2,1511.4 L1229.6,1466.1 L1233.6,1515.3 L1237.6,1468.6 L1242.5,1513.1 L1246.4,1464.0 L1251.1,1516.8 L1256.1,1464.9 L1260.2,1512.2 L1264.3,1467.4 L1268.2,1516.7 L1272.3,1509.3 L1275.7,1515.7 L1279.6,1476.1 L1283.7,1510.2 L1287.5,1464.0 L1291.9,1513.6 L1296.3,1468.7 L1300.9,1511.6 L1304.5,1463.1 L1309.1,1511.4 L1313.0,1467.9 L1317.4,1516.0 L1322.1,1469.3 L1327.0,1515.8 L1331.2,1467.4 L1335.1,1514.6 L1339.8,1469.6 L1344.3,1511.6 L1349.0,1467.5 L1352.7,1517.2 L1357.8,1466.8 L1361.6,1517.3 L1365.6,1463.6 L1369.9,1516.1 L1373.3,1468.7 L1378.0,1511.4 L1382.7,1464.0 L1386.9,1515.8 L1391.4,1469.6 L1396.4,1510.7 L1400.6,1465.0 L1405.1,1514.2 L1409.4,1465.2 L1414.1,1517.2 L1418.9,1469.8 L1423.2,1511.6 L1427.5,1513.6 L1431.7,1513.2 L1436.0,1466.4 L1439.5,1514.3 L1444.4,1469.5 L1448.6,1511.0 L1453.3,1469.3 L1457.2,1511.5 L1462.1,1463.9 L1465.5,1511.6 L1470.0,1465.3 L1474.4,1510.8 L1478.0,1466.6 L1481.7,1514.2 L1485.7,1465.9 L1489.3,1511.6 L1493.7,1466.7 L1498.1,1516.9 L1502.7,1468.7 L1506.6,1512.5 L1510.3,1470.0 L1513.9,1511.9 L1517.7,1463.7 L1521.8,1516.3 L1525.8,1479.0 L1530.3,1517.3 L1533.9,1466.5 L1538.1,1515.5 L1541.6,1494.8 L1545.8,1514.5 L1549.5,1464.4 L1554.5,1517.4 L1558.0,1469.7 L1562.6,1512.6 L1566.8,1466.0 L1570.2,1515.6 L1573.9,1466.2 L1577.9,1511.6 L1582.1,1463.1 L1586.8,1515.6 L1591.3,1465.8 L1595.5,1517.9 L1599.3,1469.4 L1603.9,1516.5 L1608.8,1469.2 L1613.4,1516.1 L1618.0,1463.5 L1622.2,1510.1 L1626.6,1467.4 L1631.5,1515.3 L1636.0,1467.0 L1640.0,1518.0 L1644.6,1468.3 L1648.0,1514.9 L1651.8,1465.8 L1655.4,1513.0 L1659.2,1469.3 L1663.4,1517.7 L1668.5,1467.5 L1672.0,1514.8 L1675.4,1469.5 L1679.6,1511.4 L1683.9,1463.4 L1688.0,1514.2 L1692.0,1465.0 L1696.3,1512.3 L1700.1,1463.1 L1703.6,1511.3 L1707.6,1469.3 L1711.0,1517.9 L1714.5,1469.3 L1718.7,1517.8 L1722.9,1469.6 L1727.1,1517.8 L1731.4,1463.8 L1735.6,1511.6 L1739.8,1463.9 L1744.3,1513.6 L1748.6,1465.9 L1752.9,1518.0 L1757.5,1464.7 L1762.3,1516.3 L1766.3,1464.9 L1770.6,1514.7 L1775.2,1464.3 L1780.2,1517.3 L1783.7,1463.4 L1787.7,1515.0 L1792.0,1463.5 L1796.5,1514.4 L1800.5,1466.3 L1804.4,1516.0 L1807.9,1463.8 L1812.3,1516.2 L1816.4,1464.8 L1820.4,1515.2 L1824.3,1466.8 L1829.2,1513.4 L1832.7,1469.1 L1836.2,1514.5 L1840.7,1465.1 L1844.2,1511.7 L1847.7,1465.1 L1852.2,1512.3 L1856.2,1468.1 L1859.8,1515.7 L1864.7,1469.6 L1868.7,1516.4 L1872.6,1465.8 L1877.5,1512.0 L1881.5,1465.5 L1885.5,1511.6 L1890.2,1466.8 L1894.5,1511.4 L1899.3,1493.2 L1903.6,1514.5 L1908.1,1468.6 L1912.3,1516.3 L1915.8,1468.2 L1919.3,1515.1 L1924.0,1467.5 L1927.7,1516.1 L1932.3,1465.8 L1937.3,1515.4 L1941.6,1468.0 L1946.5,1513.3 L1951.0,1469.0 L1955.7,1517.1 L1960.2,1466.7 L1964.9,1513.4 L1968.5,1468.2 L1972.5,1511.3 L1976.5,1465.0 L1980.0,1512.5 L1984.4,1468.4 L1987.9,1513.7 L1992.8,1463.3 L1996.5,1511.7 L2001.0,1467.2 L2004.7,1512.2 L2009.3,1465.2 L2014.1,1513.8 L2018.9,1469.4 L2023.2,1517.7 L2026.9,1463.3 L2031.6,1513.1 L2035.9,1464.9 L2040.3,1491.3 L2044.3,1468.6 L2048.7,1511.3 L2052.6,1464.8 L2056.8,1515.1 L2060.6,1466.7 L2065.3,1510.0 L2070.1,1468.8 L2073.9,1515.7 L2078.0,1466.3 L2082.4,1516.9 L2087.1,1465.9 L2090.6,1516.6 L2094.9,1466.7 L2099.6,1512.5 L2103.1,1465.1 L2107.7,1512.9 L2111.2,1465.8 L2116.2,1516.6 L2119.6,1465.6 L2123.3,1514.5 L2126.7,1469.9 L2130.4,1514.9 L2134.4,1466.8 L2138.3,1513.1 L2142.1,1464.4 L2146.0,1517.6 L2150.6,1465.3 L2154.1,1511.1 L2158.6,1468.0 L2162.7,1516.7 L2166.2,1464.6 L2169.7,1513.3 L2174.6,1466.0 L2179.1,1516.1 L2183.1,1465.3 L2186.5,1513.2 L2191.5,1468.5 L2195.9,1510.1 L2199.8,1467.6 L2203.8,1514.1 L2208.6,1467.3 L2213.2,1517.2 L2217.2,1466.5 L2221.7,1517.9 L2226.3,1468.8 L2231.2,1515.0 L2234.7,1464.7 L2239.2,1512.6 L2243.2,1466.2 L2248.2,1511.1 L2252.5,1466.9 L2256.3,1517.3 L2261.0,1467.2 L2265.8,1512.3 L2269.5,1467.0 L2273.2,1514.4 L2276.6,1464.3 L2281.6,1515.3 L2286.0,1468.2 L2290.4,1479.0 L2294.5,1464.0 L2298.9,1511.4 L2302.7,1467.0 L2307.1,1510.3 L2310.7,1469.7 L2314.9,1513.3 L2319.4,1468.3 L2323.5,1518.0 L2328.3,1465.9 L2332.7,1517.2 L2336.9,1466.0 L2340.8,1510.4 L2345.7,1468.1 L2350.3,1512.4 L2353.8,1463.9 L2358.0,1513.2 L2362.5,1466.7 L2366.4,1513.2 L2369.9,1469.4 L2374.3,1516.9 L2379.0,1464.6 L2383.4,1517.2 L2388.0,1463.9 L2393.0,1510.0 L2396.9,1465.3 L2401.7,1516.5 L2405.7,1467.1 L2409.1,1517.2 L2413.3,1469.5 L2417.5,1511.7 L2422.4,1469.3 L2427.1,1512.8 L2430.8,1469.2 L2434.5,1515.1 L2439.3,1463.4 L2443.9,1512.5 L2448.7,1468.0 L2453.2,1517.5 L2456.7,1464.6 L2461.3,1511.6 L2465.0,1467.7 L2469.0,1515.3 L2473.4,1464.6 L2478.3,1515.3 L2482.7,1463.6 L2486.8,1514.2 L2490.3,1467.2 L2494.1,1516.4 L2497.9,1468.3 L2501.7,1514.4 L2506.6,1490.8 L2511.2,1513.1 L2515.4,1464.3 L2519.9,1512.9 L2524.5,1466.6 L2529.3,1515.5 L2534.3,1464.2 L2537.9,1514.9 L2542.0,1468.4 L2546.7,1511.9 L2550.4,1467.1 L2553.8,1514.8 L2558.2,1469.1 L2561.8,1510.1 L2565.9,1466.1 L2570.6,1510.6 L2574.9,1466.8 L2578.7,1511.2 L2582.1,1465.2 L2586.3,1512.1 L2589.8,1468.7 L2593.6,1511.3 L2598.4,1468.5 L2602.4,1512.9 L2607.4,1463.3 L2612.1,1517.9 L2616.2,1480.8 L2621.0,1511.1 L2624.9,1466.0 L2628.3,1518.0" fill="none" stroke="#5b9fc4" stroke-width="2.1" opacity="1" stroke-linejoin="miter"/>
<path d="M936.0,1467.8 L941.9,1486.9 L946.9,1470.5 L952.6,1513.0 L957.3,1467.5 L963.7,1508.5 L968.3,1469.5 L973.6,1472.7 L980.0,1468.1 L986.5,1516.5 L991.9,1465.1 L997.6,1509.5 L1002.2,1465.4 L1007.4,1511.8 L1012.9,1502.7 L1019.4,1516.8 L1024.6,1466.9 L1030.5,1509.0 L1035.7,1468.1 L1041.2,1508.3 L1046.5,1468.2 L1051.9,1511.5 L1056.5,1468.4 L1062.4,1508.3 L1067.6,1469.1 L1073.0,1509.9 L1078.4,1471.7 L1084.9,1509.5 L1090.1,1465.5 L1096.5,1508.1 L1102.6,1466.7 L1107.1,1508.4 L1113.6,1472.0 L1118.1,1510.9 L1124.3,1469.1 L1129.9,1512.3 L1134.8,1471.6 L1139.6,1510.6 L1144.6,1471.6 L1150.5,1514.3 L1155.6,1466.0 L1161.5,1509.2 L1166.8,1465.9 L1173.4,1513.0 L1179.8,1471.7 L1185.1,1513.3 L1191.3,1468.6 L1196.5,1514.6 L1200.9,1469.7 L1207.1,1516.1 L1212.6,1470.3 L1217.3,1511.2 L1223.7,1469.5 L1229.5,1509.1 L1235.4,1467.2 L1240.7,1510.9 L1245.4,1464.7 L1251.4,1514.8 L1257.8,1492.0 L1263.2,1509.6 L1268.3,1465.9 L1274.8,1508.1 L1279.8,1465.6 L1284.7,1516.3 L1290.7,1465.3 L1296.4,1515.6 L1301.8,1470.8 L1306.7,1512.8 L1312.0,1469.4 L1318.5,1513.0 L1323.7,1469.9 L1329.2,1511.2 L1333.9,1465.8 L1338.8,1508.4 L1343.9,1471.5 L1349.1,1515.9 L1354.2,1465.0 L1360.5,1513.5 L1365.8,1468.9 L1371.1,1511.4 L1376.4,1470.5 L1381.2,1510.3 L1386.8,1464.4 L1393.1,1515.4 L1399.1,1466.4 L1405.4,1515.5 L1411.7,1464.2 L1416.2,1509.5 L1422.1,1466.4 L1426.9,1510.8 L1432.7,1464.8 L1438.3,1512.0 L1444.1,1470.4 L1449.9,1512.2 L1455.1,1467.3 L1461.1,1510.5 L1466.6,1470.8 L1473.1,1514.1 L1478.4,1468.9 L1484.6,1509.2 L1489.3,1464.7 L1493.7,1510.2 L1499.6,1468.9 L1506.1,1514.7 L1510.6,1465.8 L1516.0,1509.9 L1521.4,1468.3 L1526.3,1508.8 L1532.8,1471.9 L1539.2,1511.3 L1545.7,1468.8 L1550.1,1510.1 L1556.1,1470.6 L1561.3,1511.4 L1567.8,1467.9 L1573.6,1512.8 L1578.5,1467.1 L1583.2,1512.9 L1589.2,1466.0 L1593.9,1514.6 L1598.6,1468.4 L1604.3,1511.4 L1609.5,1472.0 L1615.0,1512.1 L1620.3,1465.6 L1625.5,1511.1 L1630.5,1466.7 L1635.8,1512.6 L1640.4,1469.4 L1645.3,1515.3 L1651.2,1465.4 L1656.2,1515.6 L1661.1,1469.1 L1666.8,1512.3 L1672.2,1471.5 L1677.6,1511.2 L1683.6,1465.9 L1689.6,1512.5 L1695.4,1469.7 L1700.5,1508.2 L1706.6,1467.1 L1713.0,1509.4 L1718.3,1466.5 L1723.6,1508.5 L1728.3,1466.5 L1733.0,1515.5 L1738.4,1468.8 L1743.2,1510.1 L1749.6,1471.5 L1754.8,1509.7 L1760.8,1468.4 L1765.8,1512.8 L1770.5,1468.9 L1776.7,1515.6 L1782.1,1464.2 L1787.3,1511.6 L1793.7,1468.2 L1799.9,1516.1 L1805.5,1470.8 L1811.9,1508.2 L1817.5,1469.0 L1822.4,1511.7 L1828.4,1468.2 L1834.3,1515.8 L1839.5,1466.3 L1844.2,1508.4 L1848.9,1468.8 L1855.4,1512.8 L1861.6,1470.9 L1866.5,1511.6 L1871.5,1468.6 L1877.6,1515.4 L1882.6,1470.0 L1887.4,1508.2 L1892.6,1464.8 L1897.9,1510.9 L1903.5,1468.2 L1909.9,1510.7 L1914.9,1471.5 L1920.0,1516.4 L1926.0,1465.6 L1932.5,1508.6 L1937.9,1470.6 L1944.5,1515.0 L1950.9,1466.5 L1957.4,1515.9 L1962.8,1465.6 L1967.4,1508.8 L1973.7,1471.5 L1979.6,1512.2 L1985.6,1471.9 L1991.5,1513.3 L1996.9,1467.6 L2001.8,1511.7 L2007.5,1466.6 L2013.4,1512.6 L2018.7,1465.6 L2025.1,1513.9 L2029.8,1468.3 L2034.9,1513.3 L2039.8,1469.8 L2046.2,1509.4 L2052.7,1468.9 L2058.3,1509.3 L2063.8,1471.3 L2068.8,1512.9 L2075.1,1466.1 L2079.8,1510.4 L2086.2,1469.4 L2090.7,1515.5 L2095.5,1467.5 L2100.3,1508.6 L2104.7,1469.9 L2109.8,1509.9 L2116.2,1470.7 L2120.8,1509.6 L2126.9,1485.0 L2133.5,1509.4 L2138.4,1471.1 L2144.4,1509.1 L2149.2,1468.8 L2155.5,1511.9 L2160.8,1471.6 L2167.4,1509.0 L2173.4,1471.1 L2179.4,1473.8 L2183.9,1465.8 L2189.8,1515.8 L2195.0,1469.6 L2200.9,1508.8 L2205.7,1467.6 L2211.7,1515.4 L2216.8,1469.8 L2223.1,1510.8 L2228.2,1469.7 L2232.9,1508.6 L2238.7,1490.8 L2243.8,1510.8 L2248.5,1467.4 L2253.0,1509.2 L2259.0,1471.9 L2265.0,1510.0 L2271.6,1469.5 L2276.3,1515.1 L2280.9,1465.7 L2286.7,1508.8 L2292.7,1466.8 L2297.4,1509.6 L2302.8,1465.5 L2308.1,1509.0 L2313.6,1464.4 L2319.7,1514.3 L2324.4,1467.4 L2329.0,1515.7 L2335.6,1469.4 L2340.1,1516.0 L2346.2,1468.6 L2351.7,1515.7 L2357.3,1467.2 L2363.0,1516.5 L2368.1,1469.8 L2373.5,1512.7 L2378.1,1465.2 L2383.9,1509.5 L2390.2,1467.4 L2395.9,1511.7 L2400.7,1469.5 L2407.3,1512.5 L2413.7,1511.7 L2418.3,1516.5 L2423.3,1469.7 L2428.7,1513.6 L2434.5,1498.8 L2440.5,1515.8 L2446.1,1465.2 L2452.5,1508.6 L2457.1,1467.1 L2461.6,1512.0 L2466.8,1465.4 L2473.3,1508.9 L2479.1,1466.2 L2485.0,1509.9 L2491.5,1465.7 L2496.9,1515.0 L2502.9,1469.0 L2507.5,1513.2 L2513.6,1467.0 L2518.9,1515.5 L2524.7,1464.5 L2529.7,1512.4 L2536.2,1480.8 L2541.7,1513.5 L2546.3,1471.8 L2551.8,1513.8 L2556.5,1464.1 L2562.9,1512.0 L2568.3,1469.5 L2574.4,1509.6 L2580.2,1470.8 L2585.0,1515.3 L2590.6,1470.4 L2595.2,1512.1 L2601.5,1467.2 L2607.6,1511.8 L2613.5,1464.9 L2618.2,1515.5 L2623.3,1469.7 L2628.0,1514.2" fill="none" stroke="#e0589b" stroke-width="1.8" opacity="0.9" stroke-linejoin="miter"/>
<path d="M936.0,1464.0 L939.5,1518.4 L942.5,1463.6 L946.1,1515.5 L949.0,1464.2 L952.8,1482.4 L955.6,1466.5 L959.3,1518.3 L963.2,1466.2 L967.0,1516.9 L970.3,1464.7 L973.5,1516.3 L977.3,1466.2 L980.8,1517.2 L983.6,1465.7 L986.5,1515.8 L989.5,1464.8 L992.7,1515.5 L995.6,1463.9 L998.7,1515.3 L1002.6,1464.6 L1006.5,1515.2 L1010.2,1466.4 L1013.1,1516.7 L1016.9,1466.2 L1020.6,1516.5 L1023.4,1466.9 L1027.0,1515.8 L1030.4,1465.4 L1034.0,1516.4 L1036.9,1465.7 L1039.8,1515.3 L1043.2,1489.8 L1046.3,1514.9 L1049.1,1464.2 L1052.5,1515.3 L1055.7,1485.1 L1059.0,1518.9 L1062.2,1465.7 L1064.9,1517.0 L1068.5,1464.0 L1072.3,1516.0 L1075.4,1464.0 L1078.3,1487.9 L1081.1,1466.0 L1083.7,1518.1 L1087.0,1465.2 L1090.0,1516.7 L1093.8,1463.4 L1096.7,1516.2 L1099.4,1463.5 L1102.6,1518.5 L1105.3,1465.1 L1109.0,1516.3 L1112.4,1481.2 L1116.2,1515.6 L1119.3,1464.4 L1122.2,1517.9 L1126.1,1465.1 L1129.3,1517.3 L1133.1,1466.6 L1135.9,1517.1 L1139.2,1464.2 L1142.3,1515.3 L1144.9,1465.9 L1148.5,1518.5 L1152.2,1464.7 L1156.0,1517.9 L1159.6,1463.4 L1163.6,1516.9 L1167.2,1471.3 L1170.2,1516.3 L1173.2,1466.4 L1176.4,1519.0 L1179.7,1464.0 L1183.5,1517.1 L1186.6,1464.9 L1190.0,1515.1 L1192.9,1463.4 L1195.9,1518.5 L1199.3,1466.3 L1202.9,1517.6 L1206.8,1463.1 L1209.6,1518.4 L1212.3,1465.0 L1215.3,1516.9 L1218.3,1490.2 L1221.9,1516.4 L1224.6,1465.8 L1228.5,1518.0 L1232.3,1466.7 L1236.1,1517.7 L1239.6,1465.4 L1242.4,1517.9 L1245.1,1465.6 L1248.4,1518.1 L1251.6,1466.3 L1255.0,1516.7 L1258.2,1466.8 L1261.7,1518.7 L1264.9,1463.3 L1268.0,1518.3 L1272.0,1464.8 L1275.4,1518.0 L1278.3,1463.6 L1281.3,1518.9 L1285.2,1464.2 L1289.1,1515.4 L1291.9,1463.3 L1294.9,1501.4 L1297.6,1463.9 L1301.4,1517.6 L1304.9,1466.2 L1307.8,1515.2 L1311.1,1465.1 L1314.0,1517.8 L1317.2,1464.0 L1320.6,1517.2 L1323.6,1465.9 L1327.1,1515.6 L1331.0,1464.0 L1333.9,1516.2 L1337.2,1463.4 L1340.6,1516.7 L1343.5,1464.3 L1346.1,1518.5 L1348.9,1466.2 L1352.1,1516.7 L1354.8,1465.1 L1357.6,1486.3 L1361.3,1466.0 L1364.9,1517.3 L1368.8,1466.2 L1372.4,1517.0 L1376.1,1465.5 L1378.8,1518.2 L1382.0,1464.2 L1385.2,1518.3 L1388.6,1466.1 L1391.9,1518.0 L1395.5,1466.6 L1398.9,1515.8 L1402.1,1465.0 L1404.8,1516.4 L1408.1,1466.4 L1411.7,1516.7 L1414.4,1464.6 L1418.0,1517.3 L1420.7,1465.8 L1424.3,1517.4 L1428.1,1463.5 L1430.9,1518.9 L1434.1,1466.7 L1437.4,1515.2 L1440.9,1464.0 L1444.1,1518.7 L1447.4,1463.1 L1450.3,1517.9 L1454.2,1463.6 L1457.8,1515.1 L1460.8,1465.8 L1464.3,1517.0 L1467.3,1464.9 L1470.9,1515.3 L1473.7,1465.3 L1476.4,1517.5 L1480.2,1465.7 L1483.1,1517.5 L1485.9,1463.6 L1489.3,1518.1 L1492.7,1463.3 L1496.0,1515.7 L1498.9,1464.2 L1502.6,1515.4 L1505.5,1465.7 L1508.5,1517.9 L1511.4,1464.1 L1515.1,1505.2 L1518.6,1464.7 L1521.8,1517.8 L1524.6,1466.5 L1527.3,1518.6 L1530.5,1465.5 L1534.3,1515.7 L1538.1,1464.9 L1541.3,1517.9 L1544.4,1465.9 L1548.2,1518.1 L1552.0,1465.4 L1554.9,1517.3 L1558.3,1465.7 L1562.0,1516.7 L1564.9,1465.3 L1567.6,1516.2 L1570.9,1465.7 L1573.6,1517.4 L1576.4,1465.5 L1579.0,1477.5 L1582.1,1466.2 L1585.7,1516.7 L1588.6,1466.8 L1591.4,1518.0 L1594.9,1464.0 L1598.2,1515.8 L1602.2,1463.2 L1605.3,1518.6 L1609.1,1503.2 L1611.9,1518.8 L1614.7,1465.9 L1617.4,1518.5 L1620.5,1465.2 L1623.7,1517.6 L1626.5,1466.6 L1629.4,1516.3 L1632.2,1465.6 L1635.0,1517.1 L1638.6,1466.9 L1641.8,1516.6 L1645.0,1463.7 L1648.5,1516.9 L1651.3,1466.4 L1655.1,1517.5 L1658.2,1465.3 L1661.5,1518.8 L1664.4,1466.6 L1668.1,1518.4 L1671.7,1463.5 L1674.9,1517.0 L1677.8,1465.3 L1681.0,1516.8 L1683.9,1464.1 L1687.9,1516.5 L1690.9,1466.5 L1693.8,1516.3 L1696.7,1463.9 L1700.5,1516.0 L1703.9,1463.1 L1707.3,1516.9 L1710.5,1463.1 L1713.4,1516.0 L1717.1,1463.1 L1720.0,1515.8 L1723.9,1466.9 L1727.2,1516.7 L1730.4,1465.4 L1734.1,1516.8 L1737.9,1465.3 L1741.8,1516.9 L1745.0,1466.4 L1748.2,1516.5 L1752.0,1465.4 L1755.3,1516.7 L1758.3,1463.6 L1761.7,1515.3 L1764.9,1466.2 L1768.5,1516.2 L1772.4,1464.6 L1775.1,1516.9 L1779.0,1466.8 L1782.1,1518.5 L1784.8,1464.7 L1787.8,1516.0 L1790.8,1490.8 L1794.7,1515.0 L1798.5,1466.7 L1801.5,1516.2 L1804.9,1464.8 L1807.7,1516.6 L1811.5,1464.9 L1815.4,1517.1 L1818.1,1465.7 L1821.5,1515.2 L1824.5,1465.5 L1827.6,1515.8 L1830.7,1463.3 L1833.3,1518.6 L1837.2,1465.5 L1840.5,1516.0 L1843.9,1465.8 L1847.8,1515.4 L1851.3,1466.8 L1855.2,1515.1 L1858.3,1465.1 L1861.4,1516.4 L1864.6,1463.9 L1867.9,1519.0 L1870.7,1465.5 L1873.8,1519.0 L1876.5,1465.2 L1879.8,1518.8 L1883.0,1463.8 L1886.6,1517.0 L1889.6,1466.4 L1893.0,1517.8 L1895.8,1463.2 L1899.7,1517.8 L1903.4,1464.6 L1906.4,1518.3 L1909.8,1466.1 L1912.5,1515.9 L1916.0,1464.0 L1919.6,1516.2 L1922.3,1464.6 L1926.1,1517.0 L1929.6,1465.6 L1932.6,1515.5 L1936.3,1465.6 L1939.4,1515.7 L1942.6,1465.6 L1945.8,1516.5 L1949.6,1465.3 L1953.4,1518.7 L1957.3,1463.4 L1960.6,1518.9 L1963.3,1466.8 L1966.6,1516.7 L1969.2,1465.2 L1972.5,1519.0 L1975.6,1464.3 L1979.0,1515.7 L1982.9,1465.2 L1985.8,1515.7 L1989.4,1463.7 L1992.7,1517.0 L1996.0,1463.4 L1998.7,1518.3 L2002.2,1463.5 L2004.9,1518.2 L2008.7,1472.3 L2011.7,1515.2 L2014.5,1465.7 L2018.1,1519.0 L2021.2,1466.9 L2024.6,1516.7 L2027.7,1466.8 L2031.2,1517.0 L2035.1,1463.2 L2037.9,1515.4 L2041.0,1464.9 L2043.9,1517.6 L2046.7,1467.0 L2049.8,1518.5 L2053.3,1466.7 L2056.4,1515.2 L2059.8,1464.1 L2062.5,1516.0 L2065.7,1465.8 L2068.8,1517.9 L2071.6,1465.5 L2075.0,1518.9 L2078.7,1466.9 L2081.8,1518.7 L2084.7,1465.0 L2088.2,1517.2 L2091.8,1463.3 L2094.8,1518.8 L2097.9,1465.9 L2101.7,1515.5 L2104.3,1465.2 L2107.7,1516.9 L2110.6,1463.6 L2114.3,1518.2 L2117.0,1467.0 L2120.0,1517.1 L2123.3,1463.7 L2126.1,1517.3 L2129.4,1466.8 L2133.3,1517.9 L2136.3,1466.3 L2139.1,1518.2 L2142.5,1466.6 L2145.4,1515.6 L2148.8,1466.9 L2152.5,1518.3 L2155.6,1466.2 L2159.4,1519.0 L2162.5,1463.5 L2165.6,1516.3 L2169.2,1465.7 L2172.7,1517.5 L2176.2,1466.4 L2180.0,1515.0 L2182.6,1465.4 L2185.5,1518.0 L2189.0,1463.3 L2192.2,1517.3 L2195.3,1478.7 L2198.5,1517.4 L2202.3,1464.4 L2205.8,1515.6 L2209.1,1465.4 L2211.9,1515.8 L2214.6,1466.1 L2218.2,1515.9 L2220.9,1463.8 L2224.4,1517.3 L2227.2,1465.0 L2231.0,1516.5 L2234.8,1463.2 L2237.6,1518.2 L2240.3,1463.2 L2243.3,1517.3 L2246.5,1463.4 L2249.6,1516.7 L2253.5,1464.1 L2257.1,1516.8 L2260.2,1463.2 L2264.1,1517.3 L2267.8,1465.7 L2271.0,1515.1 L2273.9,1466.7 L2277.0,1515.1 L2280.6,1464.6 L2284.3,1517.8 L2287.9,1465.7 L2291.2,1518.7 L2293.9,1466.4 L2296.9,1518.1 L2300.5,1464.9 L2303.3,1515.2 L2306.6,1465.6 L2309.9,1516.5 L2313.3,1463.8 L2316.6,1518.2 L2320.5,1466.1 L2324.0,1516.2 L2328.0,1463.5 L2331.2,1517.9 L2334.7,1463.4 L2337.5,1517.6 L2340.8,1464.1 L2344.7,1516.8 L2348.6,1464.9 L2352.0,1518.3 L2354.8,1463.9 L2357.7,1517.4 L2360.9,1463.1 L2364.1,1515.8 L2366.9,1463.6 L2370.4,1516.4 L2374.0,1464.0 L2377.0,1517.5 L2379.7,1466.4 L2382.6,1515.3 L2385.9,1465.2 L2388.5,1515.4 L2392.1,1463.5 L2395.8,1516.6 L2398.5,1464.9 L2402.0,1516.6 L2405.8,1466.7 L2409.4,1518.9 L2412.1,1466.2 L2415.2,1518.8 L2418.0,1472.3 L2421.5,1515.7 L2424.2,1464.2 L2427.7,1518.0 L2430.5,1466.4 L2433.8,1515.2 L2437.0,1464.8 L2440.0,1517.6 L2442.7,1466.1 L2446.3,1518.0 L2449.5,1464.6 L2452.9,1517.9 L2456.1,1465.2 L2459.8,1517.7 L2463.5,1466.9 L2466.9,1515.7 L2470.2,1464.4 L2474.0,1518.3 L2477.4,1466.4 L2480.8,1515.8 L2484.2,1464.8 L2487.2,1517.1 L2491.0,1465.0 L2494.7,1515.4 L2498.0,1463.6 L2501.8,1518.9 L2504.6,1465.6 L2507.6,1518.0 L2510.7,1466.9 L2514.6,1518.1 L2517.6,1466.0 L2521.2,1517.8 L2524.6,1466.9 L2527.7,1518.9 L2530.7,1464.7 L2533.9,1518.4 L2537.8,1464.2 L2540.8,1518.2 L2543.7,1466.2 L2546.5,1516.7 L2550.3,1505.3 L2553.3,1518.9 L2557.1,1464.2 L2560.5,1518.2 L2564.2,1466.2 L2566.9,1516.8 L2570.8,1464.7 L2574.0,1516.0 L2577.6,1463.4 L2581.0,1518.8 L2583.7,1464.4 L2587.4,1515.4 L2590.4,1465.4 L2593.2,1518.4 L2596.4,1464.5 L2599.5,1516.7 L2603.3,1464.8 L2606.3,1515.6 L2609.5,1466.2 L2612.4,1515.7 L2615.3,1463.6 L2618.6,1516.3 L2621.7,1466.4 L2624.9,1518.1 L2628.6,1465.7 L2631.8,1518.7" fill="none" stroke="#6aaa5a" stroke-width="2.3" opacity="1" stroke-linejoin="miter"/>
<line x1="936" y1="1490" x2="2632" y2="1490" stroke="#e0589b" stroke-width="2.2"/>
<rect x="2632" y="1474" width="11" height="36" fill="#222" rx="2"/>
<line x1="2640" y1="1458" x2="2640" y2="1544" stroke="#111" stroke-width="2"/>
<rect x="2636" y="1526" width="7" height="12" fill="#aaa"/>
<line x1="935" y1="1547.5" x2="2643" y2="1547.5" stroke="#212529" stroke-width="2"/>
<line x1="936" y1="1547.5" x2="936" y2="1555" stroke="#212529" stroke-width="2"/>
<line x1="2642" y1="1547.5" x2="2642" y2="1555" stroke="#212529" stroke-width="2"/>
<line x1="1088" y1="1547.5" x2="1088" y2="1555" stroke="#212529" stroke-width="2"/>
<text x="1088" y="1575.7" font-size="19" fill="#212529" text-anchor="middle" textLength="38" lengthAdjust="spacingAndGlyphs">Sep</text>
<line x1="1366" y1="1547.5" x2="1366" y2="1555" stroke="#212529" stroke-width="2"/>
<text x="1366" y="1575.7" font-size="19" fill="#212529" text-anchor="middle" textLength="34" lengthAdjust="spacingAndGlyphs">Oct</text>
<line x1="1654" y1="1547.5" x2="1654" y2="1555" stroke="#212529" stroke-width="2"/>
<text x="1654" y="1575.7" font-size="19" fill="#212529" text-anchor="middle" textLength="36" lengthAdjust="spacingAndGlyphs">Nov</text>
<line x1="1932" y1="1547.5" x2="1932" y2="1555" stroke="#212529" stroke-width="2"/>
<text x="1932" y="1575.7" font-size="19" fill="#212529" text-anchor="middle" textLength="35" lengthAdjust="spacingAndGlyphs">Dec</text>
<line x1="2219.5" y1="1547.5" x2="2219.5" y2="1555" stroke="#212529" stroke-width="2"/>
<text x="2219.5" y="1575.7" font-size="19" fill="#212529" text-anchor="middle" textLength="46" lengthAdjust="spacingAndGlyphs">2022</text>
<line x1="2507" y1="1547.5" x2="2507" y2="1555" stroke="#212529" stroke-width="2"/>
<text x="2507" y="1575.7" font-size="19" fill="#212529" text-anchor="middle" textLength="32" lengthAdjust="spacingAndGlyphs">Feb</text>
<rect x="937" y="1597" width="488" height="46" fill="#fff" stroke="#dcdcdc" stroke-width="2" rx="7"/>
<rect x="1218" y="1598" width="69" height="44" fill="#edf3fa"/>
<line x1="1003" y1="1597" x2="1003" y2="1643" stroke="#dcdcdc" stroke-width="2"/>
<line x1="1074.7" y1="1597" x2="1074.7" y2="1643" stroke="#dcdcdc" stroke-width="2"/>
<line x1="1147" y1="1597" x2="1147" y2="1643" stroke="#dcdcdc" stroke-width="2"/>
<line x1="1217" y1="1597" x2="1217" y2="1643" stroke="#dcdcdc" stroke-width="2"/>
<line x1="1287" y1="1597" x2="1287" y2="1643" stroke="#dcdcdc" stroke-width="2"/>
<line x1="1349.3" y1="1597" x2="1349.3" y2="1643" stroke="#dcdcdc" stroke-width="2"/>
<text x="970.0" y="1629.3" font-size="24" fill="#212529" text-anchor="middle" textLength="30" lengthAdjust="spacingAndGlyphs">1D</text>
<text x="1038.85" y="1629.3" font-size="24" fill="#212529" text-anchor="middle" textLength="38" lengthAdjust="spacingAndGlyphs">1W</text>
<text x="1110.85" y="1629.3" font-size="24" fill="#212529" text-anchor="middle" textLength="35" lengthAdjust="spacingAndGlyphs">1M</text>
<text x="1182.0" y="1629.3" font-size="24" fill="#212529" text-anchor="middle" textLength="35" lengthAdjust="spacingAndGlyphs">3M</text>
<text x="1252.0" y="1629.3" font-size="24" fill="#1160c0" text-anchor="middle" textLength="35" lengthAdjust="spacingAndGlyphs">6M</text>
<text x="1318.15" y="1629.3" font-size="24" fill="#212529" text-anchor="middle" textLength="28" lengthAdjust="spacingAndGlyphs">1Y</text>
<text x="1387.15" y="1629.3" font-size="24" fill="#212529" text-anchor="middle" textLength="40" lengthAdjust="spacingAndGlyphs">ALL</text>
<rect x="1459" y="1597" width="206" height="46" fill="#fff" stroke="#dcdcdc" stroke-width="2" rx="7"/>
<line x1="1619.4" y1="1597" x2="1619.4" y2="1643" stroke="#dcdcdc" stroke-width="2"/>
<text x="1476" y="1629.3" font-size="24" fill="#212529" textLength="99" lengthAdjust="spacingAndGlyphs">CUSTOM</text>
<path d="M1590,1624 L1606,1624 L1598,1617 Z" fill="#999"/>
<rect x="1630" y="1613" width="22" height="17" fill="none" stroke="#444" stroke-width="2" rx="1.5"/>
<path d="M1641,1616 v2 M1641,1625 v2 M1634,1621.5 h2 M1646,1621.5 h2" fill="none" stroke="#444" stroke-width="1.6"/>
<line x1="960" y1="723.5" x2="854" y2="723.5" stroke="#7000ff" stroke-width="4"/>
<path d="M868,709 L853,723.5 L868,738" fill="none" stroke="#7000ff" stroke-width="4" stroke-linecap="round" stroke-linejoin="round"/>
<rect x="962" y="690" width="235" height="59" fill="#fff" stroke="#7000ff" stroke-width="4" rx="11"/>
<text x="974" y="731" font-size="31" fill="#7000ff" font-weight="bold" textLength="213" lengthAdjust="spacingAndGlyphs">Fill out settings</text>
<line x1="962" y1="1187.5" x2="823" y2="1190" stroke="#7000ff" stroke-width="4"/>
<path d="M837,1176 L823,1190 L837,1204" fill="none" stroke="#7000ff" stroke-width="4" stroke-linecap="round" stroke-linejoin="round"/>
<rect x="963" y="1161" width="234" height="58" fill="#fff" stroke="#7000ff" stroke-width="4" rx="11"/>
<text x="976" y="1201" font-size="31" fill="#7000ff" font-weight="bold" textLength="207" lengthAdjust="spacingAndGlyphs">Start diagnosis</text>
</svg>
</body></html>
